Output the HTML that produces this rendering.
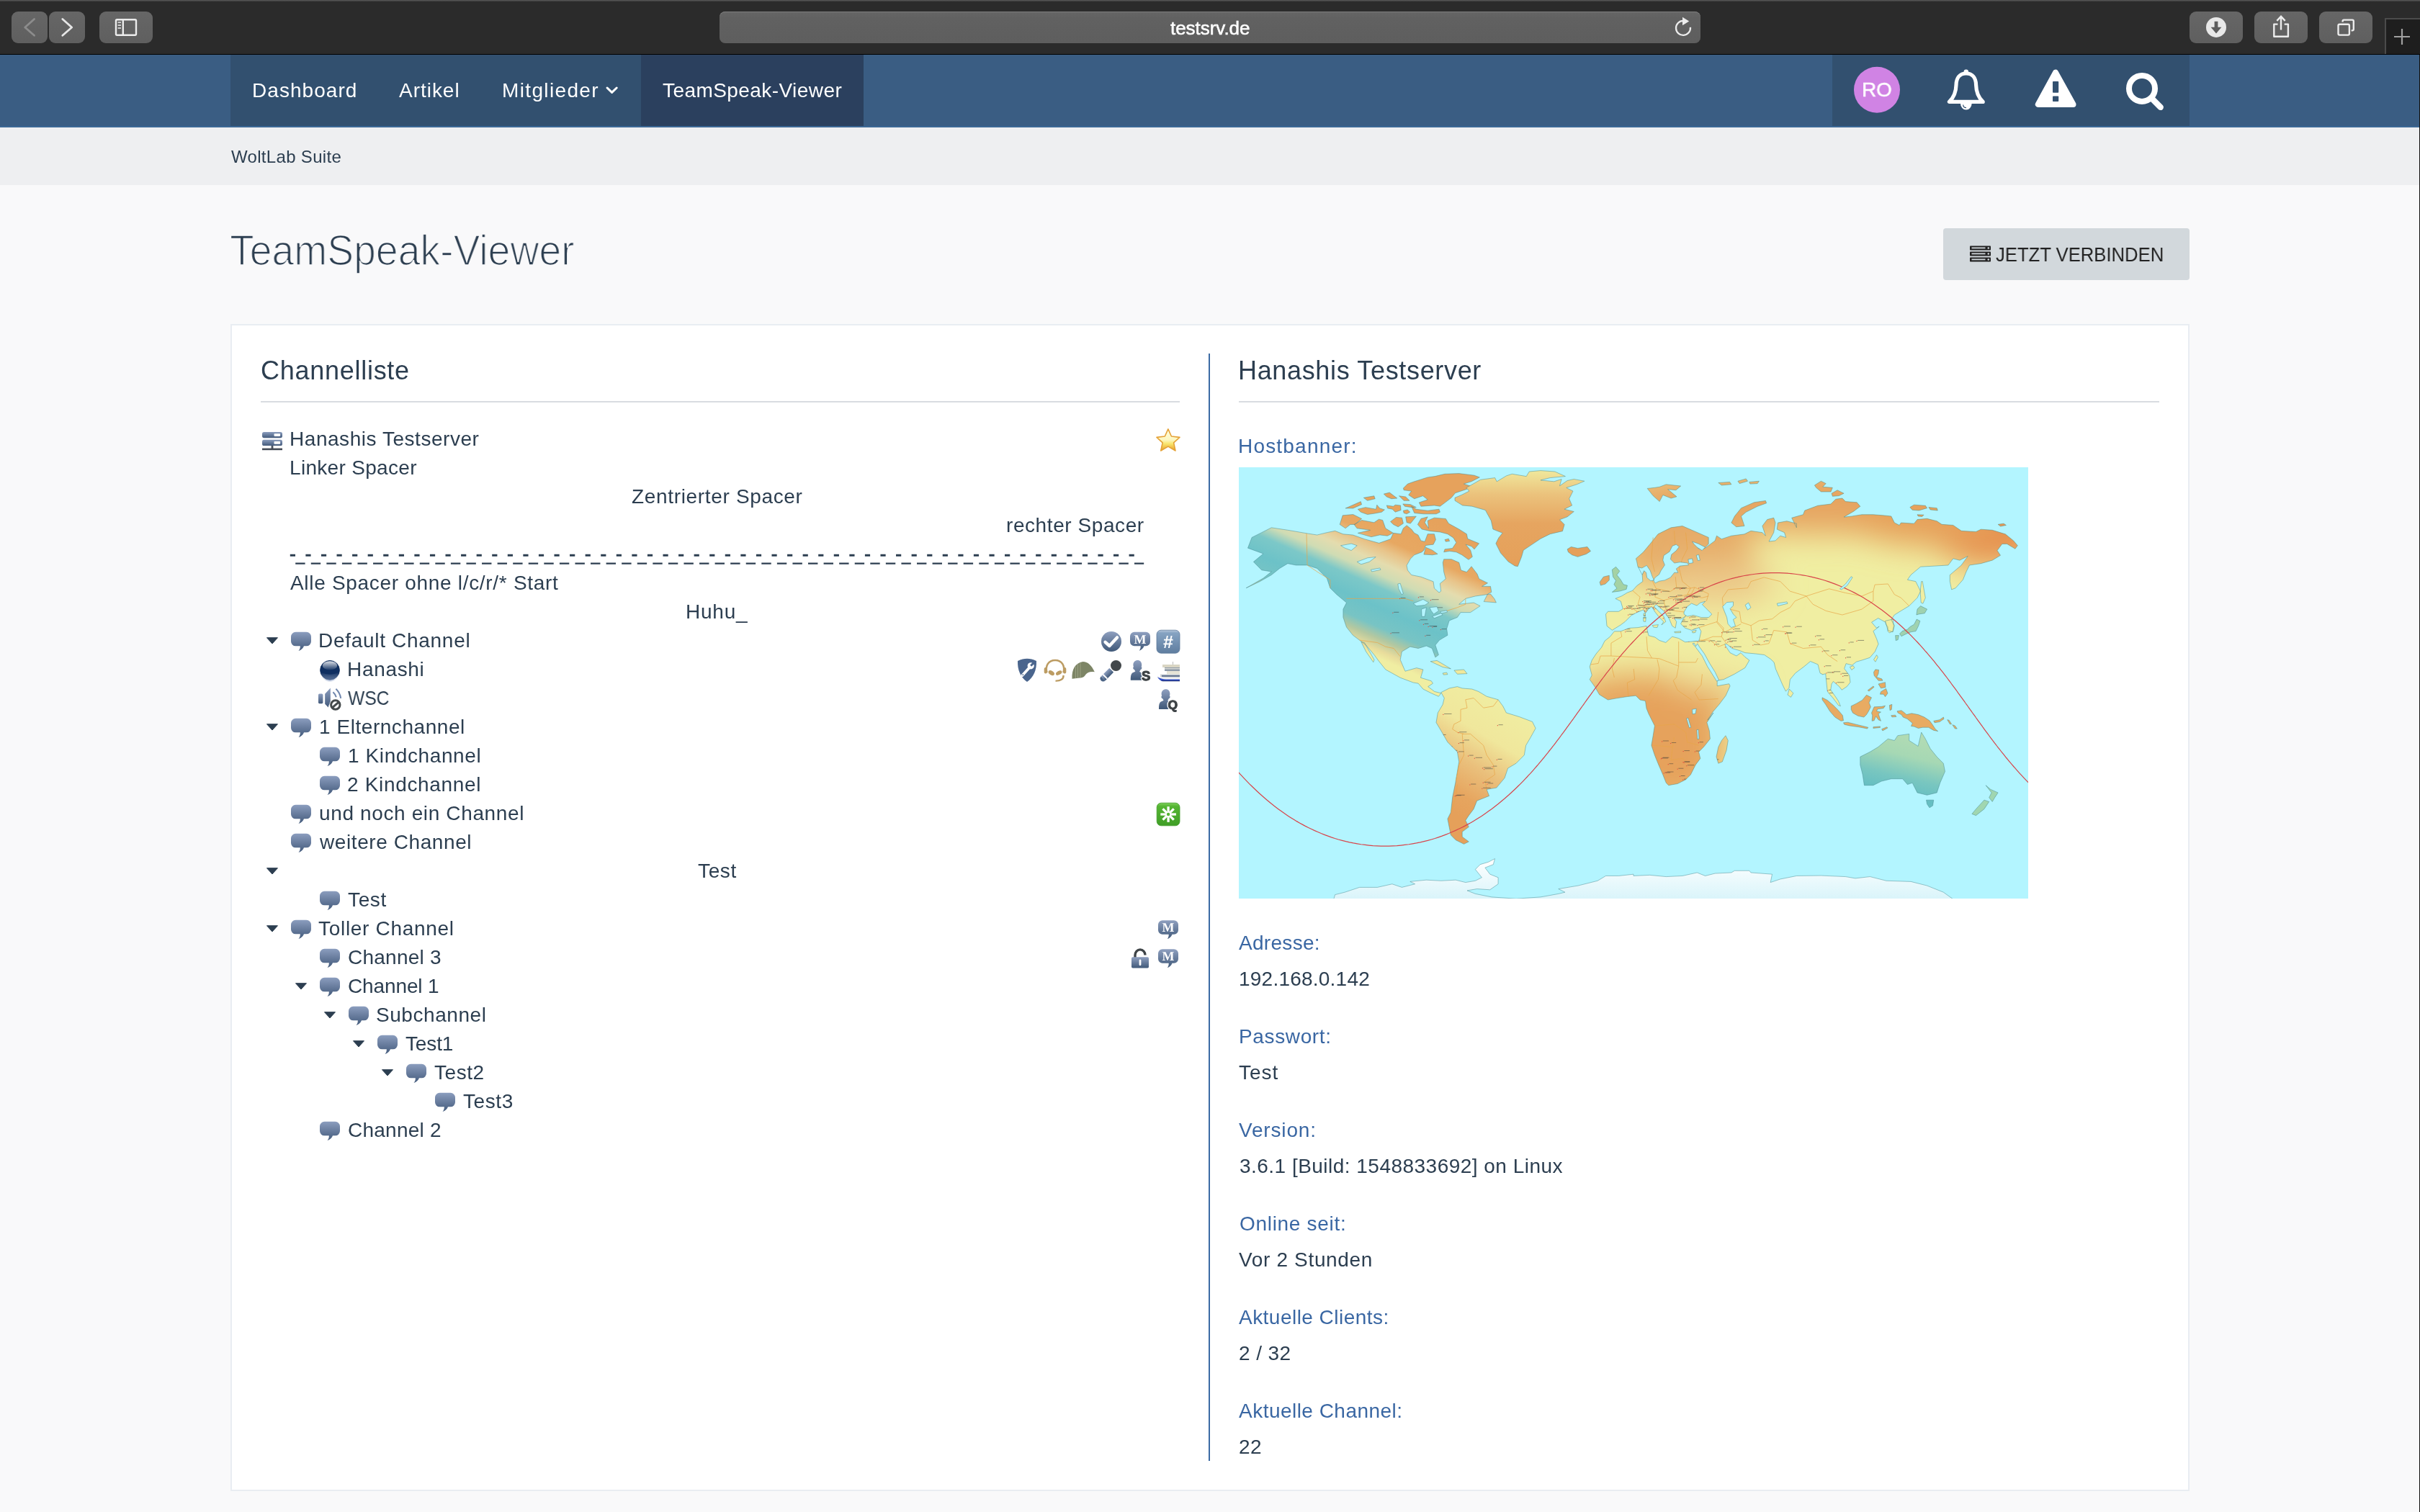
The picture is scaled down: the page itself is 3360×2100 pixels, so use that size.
<!DOCTYPE html>
<html><head><meta charset="utf-8"><title>TeamSpeak-Viewer</title><style>
html,body{margin:0;padding:0}
body{width:3360px;height:2100px;overflow:hidden;background:#f9f9fa;font-family:"Liberation Sans",sans-serif;position:relative}
.a{position:absolute}
.t{position:absolute;white-space:pre;font-family:"Liberation Sans",sans-serif;will-change:transform}
svg{position:absolute;overflow:visible;will-change:transform}
svg text{text-rendering:geometricPrecision}
</style></head><body>
<div class="a" style="left:0px;top:0px;width:3360px;height:76px;background:#2b2b2b"></div>
<div class="a" style="left:0px;top:0px;width:3360px;height:2px;background:linear-gradient(#5a5a5a,#3c3c3c)"></div>
<div class="a" style="left:0px;top:74.7px;width:3360px;height:1.3px;background:#000"></div>
<div class="a" style="left:16px;top:16px;width:50px;height:44px;background:linear-gradient(#666,#5f5f5f);border-radius:9px"></div>
<div class="a" style="left:68px;top:16px;width:50px;height:44px;background:linear-gradient(#666,#5f5f5f);border-radius:9px"></div>
<div class="a" style="left:138px;top:16px;width:74px;height:44px;background:linear-gradient(#666,#5f5f5f);border-radius:9px"></div>
<div class="a" style="left:999px;top:16px;width:1361.5px;height:44px;background:linear-gradient(#666 0,#616161 20%,#5e5e5e);border-radius:8px;box-shadow:inset 0 1px 0 #7c7c7c"></div>
<div class="a" style="left:3040px;top:16px;width:74px;height:44px;background:linear-gradient(#666,#5f5f5f);border-radius:9px"></div>
<div class="a" style="left:3130px;top:16px;width:74px;height:44px;background:linear-gradient(#666,#5f5f5f);border-radius:9px"></div>
<div class="a" style="left:3220px;top:16px;width:74px;height:44px;background:linear-gradient(#666,#5f5f5f);border-radius:9px"></div>
<div class="a" style="left:3311px;top:25px;width:49px;height:50px;background:#1e1e1e;border-left:2px solid #4b4b4b;border-top:2px solid #4b4b4b;box-sizing:border-box"></div>
<svg style="left:0;top:0" width="3360" height="2100" viewBox="0 0 3360 2100">
<polyline points="47.6,26.5 34.7,38 47.6,49.3" fill="none" stroke="#8c8c8c" stroke-width="2.8" stroke-linecap="round" stroke-linejoin="round"/>
<polyline points="86.8,26.5 99.7,38 86.8,49.3" fill="none" stroke="#e6e6e6" stroke-width="2.8" stroke-linecap="round" stroke-linejoin="round"/>
<rect x="161" y="27.2" width="28" height="21.6" rx="1.5" fill="none" stroke="#ececec" stroke-width="2.4"/>
<line x1="170.8" y1="27" x2="170.8" y2="49" stroke="#ececec" stroke-width="2.4"/>
<line x1="163.6" y1="31.2" x2="168" y2="31.2" stroke="#d8d8d8" stroke-width="1.8"/>
<line x1="163.6" y1="35.1" x2="168" y2="35.1" stroke="#d8d8d8" stroke-width="1.8"/>
<line x1="163.6" y1="39" x2="168" y2="39" stroke="#d8d8d8" stroke-width="1.8"/>
<path d="M2346.95,37.85 A10,10 0 1 1 2337.00,28.90" fill="none" stroke="#ececec" stroke-width="2.3"/>
<polygon points="2336,23.8 2345.2,29.4 2336,35.2" fill="#ececec"/>
<circle cx="3077" cy="37.9" r="14" fill="#e8e8e8"/>
<path d="M3074.6,29.8 h4.8 v8 h5 l-7.4,8.6 l-7.4,-8.6 h5 z" fill="#5c5c5c"/>
<path d="M3162.5,33.6 h-5.2 v17.2 h19.6 v-17.2 h-5.2" fill="none" stroke="#ececec" stroke-width="2.4" stroke-linejoin="round"/>
<path d="M3167,41.6 V23.4 M3161.3,28.8 L3167,22.8 L3172.7,28.8" fill="none" stroke="#ececec" stroke-width="2.4"/>
<rect x="3246.5" y="33.8" width="15.4" height="14.8" rx="1.8" fill="none" stroke="#ececec" stroke-width="2.4"/>
<path d="M3252.6,30.6 v-1.2 a1.8,1.8 0 0 1 1.8,-1.8 h11.6 a1.8,1.8 0 0 1 1.8,1.8 v11.2 a1.8,1.8 0 0 1 -1.8,1.8 h-1.4" fill="none" stroke="#ececec" stroke-width="2.4"/>
<path d="M3324,51 h22 M3335,40 v22" stroke="#a0a0a0" stroke-width="2.2" fill="none"/>
</svg>
<div class="a" style="left:0px;top:76px;width:3360px;height:101px;background:#3a5d83"></div>
<div class="a" style="left:320px;top:76px;width:879px;height:99px;background:#32506f"></div>
<div class="a" style="left:890px;top:76px;width:309px;height:99px;background:#2b405e"></div>
<div class="a" style="left:2544px;top:76px;width:496px;height:99px;background:#32506f"></div>
<div class="a" style="left:0px;top:175px;width:3360px;height:2px;background:#3b6896"></div>
<div class="a" style="left:0px;top:177px;width:3360px;height:80px;background:#eeeff1"></div>
<div class="a" style="left:3358.8px;top:76px;width:1.2px;height:2024px;background:#111"></div>
<svg style="left:0;top:0" width="3360" height="2100" viewBox="0 0 3360 2100">
<polyline points="843,122 849.6,128.4 856.2,122" fill="none" stroke="#fff" stroke-width="3" stroke-linecap="round" stroke-linejoin="round"/>
<circle cx="2606" cy="124.7" r="32" fill="#d083e4"/>
<path d="M2729.8,102 c-9,0 -13.6,6.5 -13.8,16 c-0.2,11 -3.2,17.4 -9.6,23.4 h46.8 c-6.4,-6 -9.4,-12.4 -9.6,-23.4 c-0.2,-9.500 -4.800,-16 -13.800,-16 z" fill="none" stroke="#fff" stroke-width="5.2" stroke-linejoin="round"/>
<circle cx="2729.8" cy="99.8" r="3.2" fill="#fff"/>
<path d="M2722,144 a7.800,8.600 0 0 0 15.600,0 z" fill="#fff"/>
<path d="M2725.600,145.500 a4.600,4.600 0 0 0 4.400,4.200" fill="none" stroke="#32506f" stroke-width="1.200"/>
<path d="M2854,100.600 L2829.800,145 H2878.500 Z" fill="#fff" stroke="#fff" stroke-width="8" stroke-linejoin="round"/>
<rect x="2850" y="113" width="8.200" height="15.800" rx="0.800" fill="#32506f"/>
<rect x="2850" y="133.500" width="8.200" height="7.500" rx="0.800" fill="#32506f"/>
<circle cx="2974" cy="122.900" r="18" fill="none" stroke="#fff" stroke-width="8"/>
<line x1="2988.500" y1="137.600" x2="2999.700" y2="148.900" stroke="#fff" stroke-width="8.400" stroke-linecap="round"/>
</svg>
<div class="a" style="left:2698px;top:317px;width:342px;height:72px;background:#d2d8dc;border-radius:4px"></div>
<div class="a" style="left:320px;top:450px;width:2720px;height:1621px;background:#fff;border:2px solid #e9edf2;box-sizing:border-box"></div>
<div class="a" style="left:362px;top:556.5px;width:1276px;height:2px;background:#d9dce1"></div>
<div class="a" style="left:1720px;top:556.5px;width:1278px;height:2px;background:#d9dce1"></div>
<div class="a" style="left:1678px;top:491px;width:2px;height:1538px;background:#3c6ba4"></div>
<svg style="left:0;top:0" width="3360" height="2100" viewBox="0 0 3360 2100">
<defs>
<linearGradient id="gB" x1="0" y1="0" x2="0" y2="1"><stop offset="0" stop-color="#8b9dbe"/><stop offset="1" stop-color="#435a7b"/></linearGradient>
<linearGradient id="gB2" x1="0" y1="0" x2="0" y2="1"><stop offset="0" stop-color="#8fa0c0"/><stop offset="1" stop-color="#3f5878"/></linearGradient>
<linearGradient id="gHash" x1="0" y1="0" x2="0" y2="1"><stop offset="0" stop-color="#b9c9dc"/><stop offset="0.12" stop-color="#86a3c2"/><stop offset="1" stop-color="#5f7d9f"/></linearGradient>
<linearGradient id="gGreen" x1="0" y1="0" x2="0" y2="1"><stop offset="0" stop-color="#7fd05a"/><stop offset="0.15" stop-color="#55b533"/><stop offset="1" stop-color="#3f9e26"/></linearGradient>
<linearGradient id="gStar" x1="0" y1="0" x2="0" y2="1"><stop offset="0" stop-color="#fffde0"/><stop offset="0.5" stop-color="#fdf7c0"/><stop offset="0.68" stop-color="#f9e56c"/><stop offset="1" stop-color="#e79b2a"/></linearGradient>
<radialGradient id="gSph" cx="0.5" cy="0.5" r="0.5"><stop offset="0" stop-color="#0d2d5f"/><stop offset="1" stop-color="#0d2d5f"/></radialGradient>
<linearGradient id="gSphHi" x1="0" y1="0" x2="0" y2="1"><stop offset="0" stop-color="#ffffff" stop-opacity="0.85"/><stop offset="1" stop-color="#ffffff" stop-opacity="0.05"/></linearGradient>
<linearGradient id="gSphLo" x1="0" y1="0" x2="0" y2="1"><stop offset="0" stop-color="#ffffff" stop-opacity="0"/><stop offset="1" stop-color="#8aa0c8" stop-opacity="0.55"/></linearGradient>
<g id="chan"><path d="M6.500,0 h15 a6.500,6.500 0 0 1 6.500,6.500 v6.500 a6.500,6.500 0 0 1 -6.500,6.500 h-3.500 c-1.500,3.500 -4,5.800 -7.500,6.800 c1.700,-2 2.400,-4.200 2.300,-6.800 h-6.300 a6.500,6.500 0 0 1 -6.500,-6.500 v-6.500 a6.500,6.500 0 0 1 6.500,-6.500 z" fill="url(#gB)"/></g>
<g id="arrow"><path d="M0.700,0.900 h15 l-7.500,8.300 z" fill="#2c3e50" stroke="#2c3e50" stroke-width="1" stroke-linejoin="round"/></g>
<g id="mbub"><path d="M6,0 h16 a6,6 0 0 1 6,6 v7.500 a6,6 0 0 1 -6,6 h-2.500 c-1.200,3.200 -3.600,5.400 -6.800,6.400 c1.500,-1.900 2.100,-4 2,-6.400 h-8.700 a6,6 0 0 1 -6,-6 v-7.500 a6,6 0 0 1 6,-6 z" fill="url(#gB2)"/><text x="14" y="16.200" text-anchor="middle" font-family="Liberation Serif" font-weight="bold" font-size="18" fill="#fff">M</text></g>
<g id="person"><path d="M9.800,0 c3.400,0 5.600,2.700 5.600,6.200 c0,1.200 -0.200,2.200 -0.600,3.100 c0.700,0.200 1,1 0.700,2 c-0.300,1 -0.800,1.500 -1.500,1.500 c-0.400,1.200 -1,2.100 -1.700,2.700 c0.500,1.200 1.800,1.700 3.400,2.300 v10 h-15.700 c0,-6 0.500,-9.200 3,-10.600 c1.700,-0.900 3,-1.200 3.600,-2 c-0.700,-0.600 -1.200,-1.400 -1.600,-2.400 c-0.700,0 -1.200,-0.500 -1.500,-1.500 c-0.300,-1 0,-1.800 0.700,-2 c-0.400,-0.900 -0.600,-1.900 -0.600,-3.100 c0,-3.500 2.600,-6.200 6.200,-6.200 z" fill="url(#gB2)"/></g>
</defs>
<g transform="translate(364,600)"><rect x="0" y="0" width="28" height="8.200" rx="2.600" fill="url(#gB)"/><rect x="16.500" y="2.300" width="8.600" height="3.600" rx="0.800" fill="#fff"/><rect x="0" y="10.800" width="28" height="8.200" rx="2.600" fill="url(#gB)"/><rect x="16.500" y="13.100" width="8.600" height="3.600" rx="0.800" fill="#fff"/><rect x="12.600" y="19" width="2.800" height="4" fill="#4a5260"/><rect x="0" y="22.600" width="28" height="2.600" fill="#444a55"/></g>
<use href="#chan" x="404" y="877.8"/>
<use href="#chan" x="404" y="997.8"/>
<use href="#chan" x="444" y="1037.8"/>
<use href="#chan" x="444" y="1077.8"/>
<use href="#chan" x="404" y="1117.8"/>
<use href="#chan" x="404" y="1157.8"/>
<use href="#chan" x="444" y="1237.8"/>
<use href="#chan" x="404" y="1277.8"/>
<use href="#chan" x="444" y="1317.8"/>
<use href="#chan" x="444" y="1357.8"/>
<use href="#chan" x="484" y="1397.8"/>
<use href="#chan" x="524" y="1437.8"/>
<use href="#chan" x="564" y="1477.8"/>
<use href="#chan" x="604" y="1517.8"/>
<use href="#chan" x="444" y="1557.8"/>
<use href="#arrow" x="369.8" y="884.8"/>
<use href="#arrow" x="369.8" y="1004.8"/>
<use href="#arrow" x="369.8" y="1204.8"/>
<use href="#arrow" x="369.8" y="1284.8"/>
<use href="#arrow" x="409.8" y="1364.8"/>
<use href="#arrow" x="449.8" y="1404.8"/>
<use href="#arrow" x="489.8" y="1444.8"/>
<use href="#arrow" x="529.8" y="1484.8"/>
<circle cx="458" cy="930.8" r="13.400" fill="#0f2f61" stroke="#0b2a5a" stroke-width="0.800"/>
<ellipse cx="458" cy="924.4" rx="10.200" ry="6.200" fill="url(#gSphHi)"/>
<path d="M445.4,933.8 a12.600,12.600 0 0 0 25.200,0 a30,30 0 0 1 -25.200,0 z" fill="url(#gSphLo)"/>
<g transform="translate(442,955)"><rect x="0" y="8.600" width="6.400" height="13.600" rx="1.600" fill="url(#gB)"/><path d="M16.800,0.600 v21 c-1.800,1.800 -2.800,3.800 -3,6 l-4.600,-4.800 v-14 z" fill="url(#gB)"/><path d="M20.400,6.200 c2.200,2 3.600,4.200 4.400,7" fill="none" stroke="#6f86ad" stroke-width="2"/><path d="M24.400,1.800 c3.800,3.600 6,8 6.800,13" fill="none" stroke="#6f86ad" stroke-width="2"/><circle cx="23.800" cy="24" r="8.400" fill="#fff"/><circle cx="23.800" cy="24" r="6.200" fill="none" stroke="#454a4c" stroke-width="3"/><line x1="19.600" y1="27.600" x2="28" y2="20.400" stroke="#454a4c" stroke-width="3"/></g>
<polygon points="1621.87,595.87 1626.43,605.99 1637.94,607.38 1629.60,614.92 1631.98,626.03 1621.87,620.08 1611.75,626.03 1614.13,614.92 1605.99,607.38 1617.30,605.99" fill="url(#gStar)" stroke="#e5a237" stroke-width="1.600" stroke-linejoin="round"/>
<circle cx="1543" cy="891" r="14" fill="url(#gB2)"/>
<polyline points="1534.600,891.800 1540.400,897 1551,885.400" fill="none" stroke="#fff" stroke-width="4.400" stroke-linecap="round" stroke-linejoin="round"/>
<use href="#mbub" x="1569" y="877.800"/>
<rect x="1606" y="875.200" width="32" height="32" rx="6" fill="url(#gHash)" stroke="#5f7b9c" stroke-width="0.800"/>
<text x="1622" y="900" text-anchor="middle" font-family="Liberation Sans" font-weight="bold" font-size="25" fill="#fff">#</text>
<path d="M1413,918 c4.500,-2.200 8.800,-3.200 13,-3.200 c4.200,0 8.500,1 13,3.200 c0.400,12.500 -3.800,22.500 -13,29 c-9.200,-6.500 -13.400,-16.500 -13,-29 z" fill="#4a658d"/>
<path d="M1419.500,938 l9.500,-10.500" stroke="#fff" stroke-width="3.800" stroke-linecap="round" fill="none"/>
<circle cx="1431.200" cy="924.800" r="4.600" fill="#fff"/><path d="M1431.200,924.800 l4.500,-4.800" stroke="#4a658d" stroke-width="3" fill="none"/>
<circle cx="1420.300" cy="937.200" r="0.900" fill="#4a658d"/>
<path d="M1453.500,934 c-2.500,-9 2,-17 11.500,-17 c9.500,0 14,8 11.500,17" fill="none" stroke="#bc9c63" stroke-width="2.600"/>
<rect x="1449.700" y="927" width="4.200" height="8.500" rx="2" fill="#bc9c63"/><rect x="1476.100" y="927" width="4.200" height="8.500" rx="2" fill="#bc9c63"/>
<ellipse cx="1459.800" cy="934.600" rx="4.600" ry="2.800" transform="rotate(35 1459.800 934.600)" fill="#bc9c63"/><ellipse cx="1470.200" cy="934.600" rx="4.600" ry="2.600" transform="rotate(-30 1470.200 934.600)" fill="#bc9c63"/>
<path d="M1476.500,938 c0.500,5 -4,8 -11,7.600" fill="none" stroke="#bc9c63" stroke-width="2.400"/>
<path d="M1488.500,942.800 c-0.500,-13 4,-22 15,-23.800 c7,0 12,5 16.300,14.200 c-6,-1 -10,0.600 -12.300,3.600 c-1.500,2 -2.500,4 -6,4.500 z" fill="#7d8566"/>
<path d="M1493.500,926 v16 M1496.500,922.500 v19.500 M1500,920.500 v21" stroke="#a3a98c" stroke-width="0.800" fill="none"/>
<circle cx="1549.500" cy="924.500" r="7.500" fill="#42474a"/>
<g transform="rotate(-45 1538 936)"><rect x="1529" y="931.800" width="16.500" height="8.400" rx="1" fill="url(#gB2)"/><rect x="1531.800" y="931.800" width="2" height="8.400" fill="#fff"/><path d="M1529,931.800 a4.200,4.200 0 0 0 0,8.400 z" fill="#4a6385"/></g>
<use href="#person" x="1569.800" y="917"/>
<text x="1591.2" y="944.500" text-anchor="middle" font-family="Liberation Sans" font-weight="bold" font-size="18.500" fill="#fff" stroke="#fff" stroke-width="3.600" stroke-linejoin="round">S</text><text x="1591.2" y="944.500" text-anchor="middle" font-family="Liberation Sans" font-weight="bold" font-size="18.500" fill="#3d4245" stroke="#3d4245" stroke-width="1">S</text>
<g><rect x="1614" y="923" width="24" height="4" fill="#d9d5c3"/><rect x="1617" y="927" width="21" height="5" fill="#8e9aa8"/><rect x="1617" y="928.200" width="21" height="1.200" fill="#e8e6dc"/><rect x="1620" y="932" width="18" height="4.500" fill="#e6e3d6"/><rect x="1611" y="936.500" width="27" height="4.500" fill="#cfd3d8"/><path d="M1613,937.800 h25 v2 h-25 z" fill="#5d6f8c"/><path d="M1606.300,938.500 c4,1.500 8,2.300 12,2.500 h19.700 v3 h-19 c2,0 -10,-1.500 -12.700,-5.500 z" fill="#f2f2f2"/><path d="M1607,940.300 c3,2 8,3 12,3.200 h19 v2.500 h-25 c-3,-1.500 -5,-3.500 -6,-5.700 z" fill="#3350c4"/><path d="M1612,945 h26 v1.200 h-24 z" fill="#1f2f7a"/><rect x="1628" y="919" width="1" height="4" fill="#bbb"/></g>
<use href="#person" x="1609" y="957.200"/>
<text x="1628.400" y="984.600" text-anchor="middle" font-family="Liberation Sans" font-weight="bold" font-size="17.500" fill="#fff" stroke="#fff" stroke-width="3.600" stroke-linejoin="round">Q</text><text x="1628.400" y="984.600" text-anchor="middle" font-family="Liberation Sans" font-weight="bold" font-size="17.500" fill="#3d4245" stroke="#3d4245" stroke-width="1">Q</text>
<rect x="1606.200" y="1115.200" width="31.800" height="31.600" rx="6" fill="url(#gGreen)" stroke="#3e9a27" stroke-width="0.800"/>
<line x1="1611.30" y1="1131.00" x2="1632.90" y2="1131.00" stroke="#fff" stroke-width="3.300"/>
<line x1="1614.46" y1="1123.36" x2="1629.74" y2="1138.64" stroke="#fff" stroke-width="3.300"/>
<line x1="1622.10" y1="1120.20" x2="1622.10" y2="1141.80" stroke="#fff" stroke-width="3.300"/>
<line x1="1629.74" y1="1123.36" x2="1614.46" y2="1138.64" stroke="#fff" stroke-width="3.300"/>
<circle cx="1622.100" cy="1131" r="2.200" fill="#55b533"/>
<use href="#mbub" x="1608" y="1278.200"/>
<use href="#mbub" x="1608" y="1318.200"/>
<path d="M1576,1330 v-3.500 a7,7.600 0 0 1 14,0" fill="none" stroke="#3f4447" stroke-width="3.400"/>
<rect x="1571" y="1329.200" width="24" height="15.400" rx="1.800" fill="url(#gB2)"/>
<rect x="1581.600" y="1332.600" width="2.800" height="8.600" rx="1.400" fill="#fff"/>
<line x1="402.800" y1="771.200" x2="1580" y2="771.200" stroke="#2c3e50" stroke-width="3" stroke-dasharray="7.200 14.370"/>
<line x1="410.200" y1="782.600" x2="1588.200" y2="782.600" stroke="#2c3e50" stroke-width="2.400" stroke-dasharray="13.400 8.170"/>
<rect x="2735" y="341.5" width="29" height="6" rx="0.800" fill="#222"/>
<rect x="2737.500" y="343.5" width="19" height="1.800" fill="#d2d8dc"/>
<circle cx="2760.800" cy="344.5" r="1.300" fill="#d2d8dc"/>
<rect x="2735" y="349.5" width="29" height="6" rx="0.800" fill="#222"/>
<rect x="2737.500" y="351.5" width="19" height="1.800" fill="#d2d8dc"/>
<circle cx="2760.800" cy="352.5" r="1.300" fill="#d2d8dc"/>
<rect x="2735" y="357.5" width="29" height="6" rx="0.800" fill="#222"/>
<rect x="2737.500" y="359.5" width="19" height="1.800" fill="#d2d8dc"/>
<circle cx="2760.800" cy="360.5" r="1.300" fill="#d2d8dc"/>
</svg>
<svg style="left:1720px;top:649.4px;overflow:hidden" width="1096" height="599.3" viewBox="0 0 1096 599" preserveAspectRatio="none">
<defs>
<filter id="bl" x="-30%" y="-30%" width="160%" height="160%"><feGaussianBlur stdDeviation="22"/></filter>
<filter id="bl2" x="-30%" y="-30%" width="160%" height="160%"><feGaussianBlur stdDeviation="12"/></filter>
<linearGradient id="mNA" gradientUnits="userSpaceOnUse" x1="239" y1="61" x2="157" y2="249">
<stop offset="0" stop-color="#e6a25c"/><stop offset="0.244" stop-color="#e7a862"/><stop offset="0.317" stop-color="#e8c48a"/><stop offset="0.40" stop-color="#e4dcae"/><stop offset="0.478" stop-color="#cfdcb4"/><stop offset="0.56" stop-color="#7cc8c8"/><stop offset="0.683" stop-color="#6cc2c8"/><stop offset="0.805" stop-color="#78c4c4"/><stop offset="0.878" stop-color="#b4c8a0"/><stop offset="0.95" stop-color="#e8dc9c"/><stop offset="1" stop-color="#f0eea2"/></linearGradient>
<linearGradient id="mGR" x1="0" y1="0" x2="0" y2="1"><stop offset="0" stop-color="#f0e89c"/><stop offset="0.25" stop-color="#ebc27c"/><stop offset="0.55" stop-color="#e6a560"/><stop offset="1" stop-color="#e5a05a"/></linearGradient>
<linearGradient id="mSA" gradientUnits="userSpaceOnUse" x1="390" y1="330" x2="300" y2="480"><stop offset="0" stop-color="#f0eea2"/><stop offset="0.35" stop-color="#f0e79c"/><stop offset="0.6" stop-color="#eac07c"/><stop offset="0.85" stop-color="#e6a55f"/><stop offset="1" stop-color="#e5a05a"/></linearGradient>
<linearGradient id="mAU" gradientUnits="userSpaceOnUse" x1="950" y1="370" x2="930" y2="455"><stop offset="0" stop-color="#b4dcb4"/><stop offset="0.4" stop-color="#a6d8b4"/><stop offset="0.75" stop-color="#78c6c0"/><stop offset="1" stop-color="#66bec2"/></linearGradient>
<linearGradient id="mAN" x1="0" y1="0" x2="0" y2="1"><stop offset="0" stop-color="#ffffff"/><stop offset="1" stop-color="#d8f4fa"/></linearGradient>
<clipPath id="cNA"><path d="M12.5,112.1 L18.1,97.4 L31.7,90.6 L45.3,83.8 L67.9,87.2 L94.0,91.7 L108.7,94.0 L122.3,90.6 L133.6,88.3 L144.9,92.8 L158.5,94.0 L174.4,99.6 L194.7,105.3 L210.6,99.6 L214.6,91.3 L225.1,92.6 L228.4,84.7 L233.1,80.7 L239.7,86.0 L243.7,91.3 L248.9,93.9 L252.9,101.9 L258.2,103.2 L262.2,92.6 L271.4,92.6 L273.4,100.5 L270.1,107.1 L259.5,108.5 L256.9,115.1 L254.2,117.7 L243.7,121.7 L238.4,127.0 L233.1,136.2 L234.4,142.9 L239.7,149.5 L252.9,152.1 L270.1,158.7 L271.4,168.0 L278.0,173.9 L280.7,172.0 L279.4,161.4 L287.3,154.8 L284.7,145.5 L283.3,132.3 L284.7,127.6 L295.2,127.6 L305.8,132.3 L308.5,142.9 L316.4,145.5 L323.0,137.6 L331.0,148.1 L333.6,154.8 L345.5,160.7 L337.6,165.3 L349.5,165.3 L350.8,173.3 L345.5,175.9 L340.2,186.5 L357.4,187.8 L354.8,182.5 L349.5,175.9 L328.4,178.9 L314.8,182.3 L305.7,190.2 L326.1,188.0 L335.1,192.5 L321.6,201.5 L308.0,201.5 L303.4,208.3 L292.1,212.9 L288.7,224.2 L289.9,233.2 L278.5,240.0 L272.9,246.8 L277.4,260.4 L272.9,263.8 L268.3,251.4 L260.4,248.0 L249.1,251.4 L237.8,249.1 L226.4,255.9 L224.2,267.2 L231.0,283.1 L246.8,278.5 L255.9,280.8 L252.5,292.1 L267.2,296.6 L269.5,300.0 L262.7,304.5 L271.7,311.3 L280.8,313.6 L277.4,318.1 L267.2,313.6 L255.9,307.9 L249.1,300.0 L242.3,298.9 L224.2,292.1 L203.8,280.8 L194.7,269.5 L188.0,260.4 L176.6,246.8 L167.6,240.0 L158.5,233.2 L149.5,221.9 L144.9,208.3 L144.9,197.0 L149.5,188.0 L135.9,176.6 L126.8,167.6 L122.3,154.0 L108.7,140.4 L95.1,135.9 L79.3,135.9 L67.9,133.6 L56.6,140.4 L45.3,149.5 L29.4,158.5 L10.2,167.6 L34.0,154.0 L45.3,144.9 L31.7,142.7 L20.4,131.3 L34.0,120.0Z M169.8,242.3 L174.4,243.4 L188.0,267.2 L186.8,270.6 L176.6,255.9Z M140.2,79.4 L144.2,66.8 L158.7,65.5 L170.6,71.4 L161.4,79.4 L154.8,79.4 L148.1,84.7Z M160.1,79.4 L170.6,73.4 L187.8,76.7 L194.4,72.1 L199.7,73.4 L203.7,84.7 L214.3,91.3 L206.3,95.2 L195.8,93.9 L183.9,96.6 L165.3,91.3 L182.5,87.3 L164.0,84.7Z M148.1,56.9 L169.3,47.6 L170.6,51.6 L158.7,56.9Z M165.3,58.2 L175.9,55.6 L190.5,58.2 L191.8,52.2 L195.8,56.9 L202.4,58.9 L198.4,62.2 L187.8,64.2 L178.6,65.5 L169.3,62.2Z M173.3,42.3 L187.8,39.7 L189.2,43.7 L178.6,46.3Z M228.4,29.1 L234.4,23.1 L243.7,19.8 L262.2,13.9 L272.1,12.6 L286.0,9.3 L305.8,8.6 L327.0,11.2 L334.3,13.9 L323.0,19.8 L312.4,23.1 L323.0,26.5 L316.4,30.4 L300.5,35.7 L295.2,42.3 L284.7,50.3 L279.4,54.2 L271.4,52.9 L252.9,54.2 L250.3,48.9 L262.2,45.0 L255.6,39.7 L243.7,43.7 L235.7,38.4 L239.7,33.1 L229.1,31.7Z M239.7,54.2 L246.3,58.2 L262.2,60.2 L278.0,58.2 L279.4,62.2 L274.1,64.8 L256.9,64.8 L243.7,63.5Z M201.3,37.0 L209.3,35.1 L219.8,43.0 L211.9,43.7 L205.3,41.0Z M222.5,39.7 L231.7,41.0 L237.0,46.3 L229.1,46.3Z M227.8,50.9 L238.4,51.6 L246.3,55.6 L239.7,55.6 L230.4,54.2Z M205.3,52.9 L214.6,54.2 L217.2,52.2 L224.5,52.9 L225.1,59.5 L217.2,62.2 L213.2,58.2 L206.6,56.9Z M228.4,60.2 L234.4,58.9 L237.7,62.2 L233.1,64.8 L229.1,63.5Z M231.7,68.8 L246.3,68.1 L238.4,78.0 L233.1,76.7Z M210.6,75.4 L218.5,69.4 L226.5,70.1 L228.4,78.0 L221.2,82.7 L214.6,79.4Z M248.3,79.4 L252.9,71.4 L262.2,68.8 L258.2,76.7 L263.5,84.7 L262.2,74.1 L271.4,70.1 L287.3,71.4 L291.3,78.0 L305.8,86.0 L316.4,92.6 L317.7,99.2 L333.6,105.8 L327.0,113.8 L323.0,109.8 L315.1,107.1 L321.7,115.1 L324.3,124.3 L319.0,128.3 L309.8,121.7 L301.9,117.7 L292.6,116.4 L284.7,117.7 L286.0,113.8 L296.6,112.4 L301.9,104.5 L297.9,97.9 L289.9,92.6 L279.4,89.9 L266.1,88.6 L254.2,86.0Z M259.5,111.1 L268.8,115.1 L276.1,120.4 L268.8,121.7 L256.9,121.0Z M286.0,100.5 L291.3,99.2 L292.6,102.5 L287.3,103.2Z"/></clipPath>
<clipPath id="cALL"><path d="M551.4,126.8 L561.6,117.8 L572.9,104.2 L582.0,92.8 L600.1,83.8 L615.9,81.5 L634.1,89.4 L652.2,97.4 L652.2,106.4 L645.4,113.2 L636.3,108.7 L631.8,104.2 L638.6,113.2 L647.6,112.1 L661.2,101.9 L663.5,95.1 L670.3,99.6 L683.9,95.1 L702.0,92.8 L711.0,88.3 L726.9,90.6 L731.4,95.1 L726.9,81.5 L733.7,72.5 L742.7,70.2 L745.0,77.0 L742.7,90.6 L736.0,103.0 L745.0,101.9 L751.8,95.1 L759.7,97.4 L757.5,90.6 L747.3,86.1 L748.4,77.0 L760.9,74.7 L774.4,78.1 L774.4,83.8 L767.7,70.2 L783.5,65.7 L785.8,60.0 L803.9,53.2 L822.0,51.0 L828.8,44.2 L837.9,43.0 L842.4,47.6 L858.2,48.7 L862.8,54.3 L853.7,61.1 L840.1,69.1 L851.4,67.9 L865.0,65.7 L880.9,65.7 L894.5,66.8 L905.8,67.9 L910.3,77.0 L917.1,80.4 L919.4,77.0 L937.5,78.1 L942.0,72.5 L955.6,71.3 L969.2,74.7 L976.0,79.3 L991.8,80.4 L1003.2,88.3 L1023.5,89.4 L1030.3,86.1 L1046.2,87.2 L1064.3,92.8 L1075.6,101.9 L1081.3,108.7 L1077.9,113.2 L1066.6,106.4 L1059.8,106.4 L1053.0,115.5 L1057.5,122.3 L1046.2,129.1 L1030.3,133.6 L1014.5,135.9 L1010.0,144.9 L1005.4,156.2 L995.2,167.6 L989.6,169.8 L987.3,158.5 L987.3,149.5 L1003.2,135.9 L1012.2,123.4 L1000.9,129.1 L991.8,126.8 L985.0,135.9 L966.9,137.0 L946.6,138.1 L933.0,149.5 L928.4,156.2 L939.8,158.5 L946.6,172.1 L942.0,181.2 L930.7,192.5 L919.4,199.3 L910.3,204.9 L905.8,211.7 L910.3,219.7 L908.1,228.7 L901.3,226.4 L897.9,215.1 L887.7,209.5 L878.6,215.1 L885.4,223.1 L889.2,221.0 L880.9,227.5 L885.6,238.2 L888.0,245.3 L883.3,255.9 L876.2,264.2 L865.5,267.7 L857.3,270.1 L851.4,274.8 L843.1,272.5 L840.7,279.5 L847.8,289.0 L849.0,298.5 L844.3,304.4 L837.2,309.1 L833.6,304.4 L825.4,297.3 L823.0,300.8 L821.8,309.1 L827.7,317.4 L832.5,324.5 L835.4,331.5 L832.5,330.4 L825.4,320.9 L818.3,312.6 L817.1,310.3 L814.7,286.6 L810.0,287.8 L810.0,287.2 L807.0,285.7 L804.1,273.8 L793.6,269.4 L784.7,276.8 L772.8,285.7 L765.4,294.6 L763.9,306.5 L759.4,311.0 L755.0,302.1 L750.5,291.7 L745.3,279.8 L743.1,270.8 L738.6,266.4 L729.7,260.4 L717.8,258.9 L702.9,257.5 L695.5,254.5 L685.0,251.5 L677.6,245.5 L674.6,245.5 L676.1,248.5 L682.1,257.5 L691.0,261.9 L697.0,257.5 L702.9,263.4 L708.9,267.9 L702.9,278.3 L688.0,287.2 L673.1,294.6 L664.2,296.1 L664.2,303.6 L680.6,300.6 L682.1,303.6 L676.1,317.0 L667.2,328.9 L658.3,339.3 L650.8,351.0 L659.0,340.8 L649.9,354.3 L653.3,365.7 L654.4,377.0 L645.4,388.3 L638.6,395.1 L640.8,404.2 L634.1,413.2 L627.3,426.8 L620.5,433.6 L609.1,439.3 L596.7,441.5 L593.3,438.1 L588.8,426.8 L582.0,411.0 L577.4,399.6 L572.9,386.1 L575.2,372.5 L577.4,358.9 L570.6,345.3 L569.0,342.2 L566.0,334.8 L564.5,324.4 L557.1,322.9 L551.2,317.0 L539.3,318.4 L524.4,320.7 L512.5,322.9 L500.6,315.5 L494.6,305.1 L487.2,294.6 L490.2,288.7 L487.2,276.8 L490.2,267.9 L496.1,258.9 L503.6,250.0 L508.0,241.1 L515.5,235.1 L521.4,227.7 L530.3,227.7 L542.2,223.2 L554.1,222.5 L566.0,220.3 L567.5,227.7 L569.0,233.6 L577.9,235.9 L583.9,240.3 L592.8,243.3 L601.7,235.1 L610.7,237.4 L619.6,242.6 L630.0,241.8 L638.9,241.1 L641.9,227.7 L638.9,222.5 L628.5,226.2 L619.6,223.2 L613.6,217.3 L616.6,211.3 L621.1,205.4 L618.1,208.4 L613.6,210.6 L604.7,209.8 L607.7,214.3 L606.2,223.2 L601.7,220.3 L597.3,209.8 L589.8,199.4 L579.4,190.5 L576.5,193.5 L582.4,199.4 L589.8,206.9 L592.8,214.3 L586.9,218.8 L589.8,214.3 L583.9,208.4 L577.9,200.9 L573.5,193.5 L569.0,196.5 L564.5,202.4 L561.6,197.9 L554.1,200.9 L545.2,205.4 L536.3,214.3 L530.3,218.8 L518.4,226.2 L511.0,220.3 L509.5,203.9 L512.5,200.2 L527.4,200.2 L533.3,196.5 L530.3,186.0 L522.9,182.3 L531.8,178.6 L539.3,174.1 L546.7,171.2 L552.6,164.5 L560.8,158.5 L560.1,148.9 L563.1,142.9 L554.1,138.4 L552.6,131.0Z M683.9,77.0 L688.4,67.9 L697.5,56.6 L715.6,48.7 L731.4,46.4 L732.6,49.8 L720.1,54.3 L704.2,62.3 L697.5,67.9 L702.0,81.5 L690.7,82.7Z M567.2,29.4 L577.4,28.3 L584.2,27.2 L593.3,23.8 L613.7,26.0 L606.9,31.7 L595.6,30.6 L608.0,40.8 L600.1,43.0 L588.8,38.5 L584.2,47.6 L575.2,39.6Z M665.8,21.5 L681.6,20.4 L683.9,23.8 L670.3,24.9Z M692.9,19.2 L704.2,15.9 L706.5,19.2 L695.2,22.6Z M708.8,20.4 L722.4,19.2 L720.1,22.6 L709.9,23.1Z M799.4,24.9 L808.4,19.2 L815.2,22.6 L810.7,27.2 L824.3,28.3 L822.0,34.0 L808.4,34.0 L801.6,28.3Z M823.1,36.2 L831.1,31.7 L840.1,36.2 L833.3,39.6 L824.3,40.3Z M931.8,55.5 L937.5,52.1 L953.3,53.2 L955.6,56.6 L944.3,60.0 L935.2,59.3Z M957.9,55.5 L969.2,56.6 L970.3,60.0 L960.1,58.9Z M942.0,65.7 L951.1,66.1 L948.8,68.4 L943.2,67.9Z M1054.1,79.3 L1062.0,78.1 L1065.4,80.4 L1057.5,82.0Z M947.7,158.5 L949.3,158.5 L953.3,181.2 L949.9,189.1 L947.2,188.0 L946.1,172.1Z M675.9,372.5 L679.3,379.3 L677.1,392.8 L671.4,408.7 L665.8,411.0 L663.0,401.9 L665.8,388.3 L670.3,379.3Z M764.3,307.9 L769.9,313.6 L766.5,319.2 L762.0,315.9Z M885.6,260.6 L887.4,263.6 L883.9,270.1 L881.5,267.1Z M848.4,277.2 L853.1,275.4 L854.9,278.4 L850.8,281.3Z M897.5,213.4 L902.2,212.2 L908.1,211.0 L909.3,220.5 L908.1,227.5 L903.4,229.9 L901.0,227.5 L901.0,221.6 L898.6,218.1Z M574.2,219.5 L582.4,218.5 L580.9,222.5 L575.7,222.0Z M561.6,208.4 L565.3,208.1 L564.8,214.3 L561.9,214.0Z M561.9,203.2 L564.3,202.4 L564.5,206.9 L562.3,206.9Z M604.7,228.4 L613.6,227.7 L613.6,229.5 L605.5,229.8Z M629.3,227.7 L635.2,226.2 L633.7,229.5 L630.0,229.8Z M12.5,112.1 L18.1,97.4 L31.7,90.6 L45.3,83.8 L67.9,87.2 L94.0,91.7 L108.7,94.0 L122.3,90.6 L133.6,88.3 L144.9,92.8 L158.5,94.0 L174.4,99.6 L194.7,105.3 L210.6,99.6 L214.6,91.3 L225.1,92.6 L228.4,84.7 L233.1,80.7 L239.7,86.0 L243.7,91.3 L248.9,93.9 L252.9,101.9 L258.2,103.2 L262.2,92.6 L271.4,92.6 L273.4,100.5 L270.1,107.1 L259.5,108.5 L256.9,115.1 L254.2,117.7 L243.7,121.7 L238.4,127.0 L233.1,136.2 L234.4,142.9 L239.7,149.5 L252.9,152.1 L270.1,158.7 L271.4,168.0 L278.0,173.9 L280.7,172.0 L279.4,161.4 L287.3,154.8 L284.7,145.5 L283.3,132.3 L284.7,127.6 L295.2,127.6 L305.8,132.3 L308.5,142.9 L316.4,145.5 L323.0,137.6 L331.0,148.1 L333.6,154.8 L345.5,160.7 L337.6,165.3 L349.5,165.3 L350.8,173.3 L345.5,175.9 L340.2,186.5 L357.4,187.8 L354.8,182.5 L349.5,175.9 L328.4,178.9 L314.8,182.3 L305.7,190.2 L326.1,188.0 L335.1,192.5 L321.6,201.5 L308.0,201.5 L303.4,208.3 L292.1,212.9 L288.7,224.2 L289.9,233.2 L278.5,240.0 L272.9,246.8 L277.4,260.4 L272.9,263.8 L268.3,251.4 L260.4,248.0 L249.1,251.4 L237.8,249.1 L226.4,255.9 L224.2,267.2 L231.0,283.1 L246.8,278.5 L255.9,280.8 L252.5,292.1 L267.2,296.6 L269.5,300.0 L262.7,304.5 L271.7,311.3 L280.8,313.6 L277.4,318.1 L267.2,313.6 L255.9,307.9 L249.1,300.0 L242.3,298.9 L224.2,292.1 L203.8,280.8 L194.7,269.5 L188.0,260.4 L176.6,246.8 L167.6,240.0 L158.5,233.2 L149.5,221.9 L144.9,208.3 L144.9,197.0 L149.5,188.0 L135.9,176.6 L126.8,167.6 L122.3,154.0 L108.7,140.4 L95.1,135.9 L79.3,135.9 L67.9,133.6 L56.6,140.4 L45.3,149.5 L29.4,158.5 L10.2,167.6 L34.0,154.0 L45.3,144.9 L31.7,142.7 L20.4,131.3 L34.0,120.0Z M169.8,242.3 L174.4,243.4 L188.0,267.2 L186.8,270.6 L176.6,255.9Z M140.2,79.4 L144.2,66.8 L158.7,65.5 L170.6,71.4 L161.4,79.4 L154.8,79.4 L148.1,84.7Z M160.1,79.4 L170.6,73.4 L187.8,76.7 L194.4,72.1 L199.7,73.4 L203.7,84.7 L214.3,91.3 L206.3,95.2 L195.8,93.9 L183.9,96.6 L165.3,91.3 L182.5,87.3 L164.0,84.7Z M148.1,56.9 L169.3,47.6 L170.6,51.6 L158.7,56.9Z M165.3,58.2 L175.9,55.6 L190.5,58.2 L191.8,52.2 L195.8,56.9 L202.4,58.9 L198.4,62.2 L187.8,64.2 L178.6,65.5 L169.3,62.2Z M173.3,42.3 L187.8,39.7 L189.2,43.7 L178.6,46.3Z M228.4,29.1 L234.4,23.1 L243.7,19.8 L262.2,13.9 L272.1,12.6 L286.0,9.3 L305.8,8.6 L327.0,11.2 L334.3,13.9 L323.0,19.8 L312.4,23.1 L323.0,26.5 L316.4,30.4 L300.5,35.7 L295.2,42.3 L284.7,50.3 L279.4,54.2 L271.4,52.9 L252.9,54.2 L250.3,48.9 L262.2,45.0 L255.6,39.7 L243.7,43.7 L235.7,38.4 L239.7,33.1 L229.1,31.7Z M239.7,54.2 L246.3,58.2 L262.2,60.2 L278.0,58.2 L279.4,62.2 L274.1,64.8 L256.9,64.8 L243.7,63.5Z M201.3,37.0 L209.3,35.1 L219.8,43.0 L211.9,43.7 L205.3,41.0Z M222.5,39.7 L231.7,41.0 L237.0,46.3 L229.1,46.3Z M227.8,50.9 L238.4,51.6 L246.3,55.6 L239.7,55.6 L230.4,54.2Z M205.3,52.9 L214.6,54.2 L217.2,52.2 L224.5,52.9 L225.1,59.5 L217.2,62.2 L213.2,58.2 L206.6,56.9Z M228.4,60.2 L234.4,58.9 L237.7,62.2 L233.1,64.8 L229.1,63.5Z M231.7,68.8 L246.3,68.1 L238.4,78.0 L233.1,76.7Z M210.6,75.4 L218.5,69.4 L226.5,70.1 L228.4,78.0 L221.2,82.7 L214.6,79.4Z M248.3,79.4 L252.9,71.4 L262.2,68.8 L258.2,76.7 L263.5,84.7 L262.2,74.1 L271.4,70.1 L287.3,71.4 L291.3,78.0 L305.8,86.0 L316.4,92.6 L317.7,99.2 L333.6,105.8 L327.0,113.8 L323.0,109.8 L315.1,107.1 L321.7,115.1 L324.3,124.3 L319.0,128.3 L309.8,121.7 L301.9,117.7 L292.6,116.4 L284.7,117.7 L286.0,113.8 L296.6,112.4 L301.9,104.5 L297.9,97.9 L289.9,92.6 L279.4,89.9 L266.1,88.6 L254.2,86.0Z M259.5,111.1 L268.8,115.1 L276.1,120.4 L268.8,121.7 L256.9,121.0Z M286.0,100.5 L291.3,99.2 L292.6,102.5 L287.3,103.2Z M280.8,312.5 L292.1,306.8 L303.4,304.5 L310.2,306.8 L323.8,307.9 L332.9,311.3 L344.2,318.1 L360.1,322.6 L366.8,331.7 L371.4,340.8 L389.5,346.4 L407.6,353.2 L412.1,362.3 L405.3,374.7 L398.6,386.1 L396.3,399.6 L385.0,411.0 L373.6,417.8 L369.1,431.3 L357.8,444.9 L344.2,447.2 L347.6,456.2 L330.6,463.0 L326.1,474.4 L319.3,483.4 L314.8,490.2 L319.3,499.3 L310.2,506.1 L310.2,512.9 L319.3,519.7 L312.5,523.1 L301.2,517.4 L294.4,510.6 L292.1,499.3 L289.9,488.0 L294.4,478.9 L296.6,458.5 L301.2,435.9 L305.7,408.7 L303.4,395.1 L289.9,381.5 L280.8,365.7 L274.0,354.3 L276.3,340.8 L283.1,329.4 L285.3,320.4Z"/></clipPath>
<clipPath id="cEA"><path d="M551.4,126.8 L561.6,117.8 L572.9,104.2 L582.0,92.8 L600.1,83.8 L615.9,81.5 L634.1,89.4 L652.2,97.4 L652.2,106.4 L645.4,113.2 L636.3,108.7 L631.8,104.2 L638.6,113.2 L647.6,112.1 L661.2,101.9 L663.5,95.1 L670.3,99.6 L683.9,95.1 L702.0,92.8 L711.0,88.3 L726.9,90.6 L731.4,95.1 L726.9,81.5 L733.7,72.5 L742.7,70.2 L745.0,77.0 L742.7,90.6 L736.0,103.0 L745.0,101.9 L751.8,95.1 L759.7,97.4 L757.5,90.6 L747.3,86.1 L748.4,77.0 L760.9,74.7 L774.4,78.1 L774.4,83.8 L767.7,70.2 L783.5,65.7 L785.8,60.0 L803.9,53.2 L822.0,51.0 L828.8,44.2 L837.9,43.0 L842.4,47.6 L858.2,48.7 L862.8,54.3 L853.7,61.1 L840.1,69.1 L851.4,67.9 L865.0,65.7 L880.9,65.7 L894.5,66.8 L905.8,67.9 L910.3,77.0 L917.1,80.4 L919.4,77.0 L937.5,78.1 L942.0,72.5 L955.6,71.3 L969.2,74.7 L976.0,79.3 L991.8,80.4 L1003.2,88.3 L1023.5,89.4 L1030.3,86.1 L1046.2,87.2 L1064.3,92.8 L1075.6,101.9 L1081.3,108.7 L1077.9,113.2 L1066.6,106.4 L1059.8,106.4 L1053.0,115.5 L1057.5,122.3 L1046.2,129.1 L1030.3,133.6 L1014.5,135.9 L1010.0,144.9 L1005.4,156.2 L995.2,167.6 L989.6,169.8 L987.3,158.5 L987.3,149.5 L1003.2,135.9 L1012.2,123.4 L1000.9,129.1 L991.8,126.8 L985.0,135.9 L966.9,137.0 L946.6,138.1 L933.0,149.5 L928.4,156.2 L939.8,158.5 L946.6,172.1 L942.0,181.2 L930.7,192.5 L919.4,199.3 L910.3,204.9 L905.8,211.7 L910.3,219.7 L908.1,228.7 L901.3,226.4 L897.9,215.1 L887.7,209.5 L878.6,215.1 L885.4,223.1 L889.2,221.0 L880.9,227.5 L885.6,238.2 L888.0,245.3 L883.3,255.9 L876.2,264.2 L865.5,267.7 L857.3,270.1 L851.4,274.8 L843.1,272.5 L840.7,279.5 L847.8,289.0 L849.0,298.5 L844.3,304.4 L837.2,309.1 L833.6,304.4 L825.4,297.3 L823.0,300.8 L821.8,309.1 L827.7,317.4 L832.5,324.5 L835.4,331.5 L832.5,330.4 L825.4,320.9 L818.3,312.6 L817.1,310.3 L814.7,286.6 L810.0,287.8 L810.0,287.2 L807.0,285.7 L804.1,273.8 L793.6,269.4 L784.7,276.8 L772.8,285.7 L765.4,294.6 L763.9,306.5 L759.4,311.0 L755.0,302.1 L750.5,291.7 L745.3,279.8 L743.1,270.8 L738.6,266.4 L729.7,260.4 L717.8,258.9 L702.9,257.5 L695.5,254.5 L685.0,251.5 L677.6,245.5 L674.6,245.5 L676.1,248.5 L682.1,257.5 L691.0,261.9 L697.0,257.5 L702.9,263.4 L708.9,267.9 L702.9,278.3 L688.0,287.2 L673.1,294.6 L664.2,296.1 L664.2,303.6 L680.6,300.6 L682.1,303.6 L676.1,317.0 L667.2,328.9 L658.3,339.3 L650.8,351.0 L659.0,340.8 L649.9,354.3 L653.3,365.7 L654.4,377.0 L645.4,388.3 L638.6,395.1 L640.8,404.2 L634.1,413.2 L627.3,426.8 L620.5,433.6 L609.1,439.3 L596.7,441.5 L593.3,438.1 L588.8,426.8 L582.0,411.0 L577.4,399.6 L572.9,386.1 L575.2,372.5 L577.4,358.9 L570.6,345.3 L569.0,342.2 L566.0,334.8 L564.5,324.4 L557.1,322.9 L551.2,317.0 L539.3,318.4 L524.4,320.7 L512.5,322.9 L500.6,315.5 L494.6,305.1 L487.2,294.6 L490.2,288.7 L487.2,276.8 L490.2,267.9 L496.1,258.9 L503.6,250.0 L508.0,241.1 L515.5,235.1 L521.4,227.7 L530.3,227.7 L542.2,223.2 L554.1,222.5 L566.0,220.3 L567.5,227.7 L569.0,233.6 L577.9,235.9 L583.9,240.3 L592.8,243.3 L601.7,235.1 L610.7,237.4 L619.6,242.6 L630.0,241.8 L638.9,241.1 L641.9,227.7 L638.9,222.5 L628.5,226.2 L619.6,223.2 L613.6,217.3 L616.6,211.3 L621.1,205.4 L618.1,208.4 L613.6,210.6 L604.7,209.8 L607.7,214.3 L606.2,223.2 L601.7,220.3 L597.3,209.8 L589.8,199.4 L579.4,190.5 L576.5,193.5 L582.4,199.4 L589.8,206.9 L592.8,214.3 L586.9,218.8 L589.8,214.3 L583.9,208.4 L577.9,200.9 L573.5,193.5 L569.0,196.5 L564.5,202.4 L561.6,197.9 L554.1,200.9 L545.2,205.4 L536.3,214.3 L530.3,218.8 L518.4,226.2 L511.0,220.3 L509.5,203.9 L512.5,200.2 L527.4,200.2 L533.3,196.5 L530.3,186.0 L522.9,182.3 L531.8,178.6 L539.3,174.1 L546.7,171.2 L552.6,164.5 L560.8,158.5 L560.1,148.9 L563.1,142.9 L554.1,138.4 L552.6,131.0Z M683.9,77.0 L688.4,67.9 L697.5,56.6 L715.6,48.7 L731.4,46.4 L732.6,49.8 L720.1,54.3 L704.2,62.3 L697.5,67.9 L702.0,81.5 L690.7,82.7Z M567.2,29.4 L577.4,28.3 L584.2,27.2 L593.3,23.8 L613.7,26.0 L606.9,31.7 L595.6,30.6 L608.0,40.8 L600.1,43.0 L588.8,38.5 L584.2,47.6 L575.2,39.6Z M665.8,21.5 L681.6,20.4 L683.9,23.8 L670.3,24.9Z M692.9,19.2 L704.2,15.9 L706.5,19.2 L695.2,22.6Z M708.8,20.4 L722.4,19.2 L720.1,22.6 L709.9,23.1Z M799.4,24.9 L808.4,19.2 L815.2,22.6 L810.7,27.2 L824.3,28.3 L822.0,34.0 L808.4,34.0 L801.6,28.3Z M823.1,36.2 L831.1,31.7 L840.1,36.2 L833.3,39.6 L824.3,40.3Z M931.8,55.5 L937.5,52.1 L953.3,53.2 L955.6,56.6 L944.3,60.0 L935.2,59.3Z M957.9,55.5 L969.2,56.6 L970.3,60.0 L960.1,58.9Z M942.0,65.7 L951.1,66.1 L948.8,68.4 L943.2,67.9Z M1054.1,79.3 L1062.0,78.1 L1065.4,80.4 L1057.5,82.0Z M947.7,158.5 L949.3,158.5 L953.3,181.2 L949.9,189.1 L947.2,188.0 L946.1,172.1Z M675.9,372.5 L679.3,379.3 L677.1,392.8 L671.4,408.7 L665.8,411.0 L663.0,401.9 L665.8,388.3 L670.3,379.3Z M764.3,307.9 L769.9,313.6 L766.5,319.2 L762.0,315.9Z M885.6,260.6 L887.4,263.6 L883.9,270.1 L881.5,267.1Z M848.4,277.2 L853.1,275.4 L854.9,278.4 L850.8,281.3Z M897.5,213.4 L902.2,212.2 L908.1,211.0 L909.3,220.5 L908.1,227.5 L903.4,229.9 L901.0,227.5 L901.0,221.6 L898.6,218.1Z M574.2,219.5 L582.4,218.5 L580.9,222.5 L575.7,222.0Z M561.6,208.4 L565.3,208.1 L564.8,214.3 L561.9,214.0Z M561.9,203.2 L564.3,202.4 L564.5,206.9 L562.3,206.9Z M604.7,228.4 L613.6,227.7 L613.6,229.5 L605.5,229.8Z M629.3,227.7 L635.2,226.2 L633.7,229.5 L630.0,229.8Z"/></clipPath>
</defs>
<rect x="0" y="0" width="1096" height="599" fill="#b3f5ff"/>
<path d="M131.3,601.2 L133.6,593.3 L147.2,589.9 L167.6,583.1 L192.5,583.1 L212.9,578.5 L226.4,583.1 L244.6,578.5 L237.8,575.1 L260.4,572.9 L280.8,574.0 L301.2,572.9 L314.8,576.3 L328.4,574.0 L337.4,569.5 L328.4,558.2 L335.1,551.4 L346.5,548.0 L355.5,543.4 L353.3,551.4 L341.9,555.9 L348.7,564.9 L360.1,569.5 L360.1,578.5 L348.7,586.5 L330.6,585.3 L317.0,587.6 L328.4,592.1 L351.0,596.6 L385.0,598.9 L418.9,596.6 L443.8,592.1 L452.9,589.9 L443.8,585.3 L471.0,580.8 L498.2,574.0 L509.5,567.2 L527.6,567.2 L548.0,564.9 L548.0,567.2 L570.6,566.1 L593.3,568.3 L615.9,567.2 L636.3,562.7 L647.6,567.2 L661.2,563.8 L683.9,562.7 L688.4,560.0 L708.8,560.0 L711.0,562.7 L740.5,564.9 L738.2,576.3 L751.8,571.7 L774.4,567.2 L808.4,566.8 L842.4,568.3 L856.0,570.6 L876.4,568.3 L899.0,574.0 L933.0,575.1 L955.6,580.8 L978.3,589.9 L994.1,601.2Z" fill="url(#mAN)" stroke="#3f7f86" stroke-width="0.45" stroke-linejoin="round"/>
<path d="M12.5,112.1 L18.1,97.4 L31.7,90.6 L45.3,83.8 L67.9,87.2 L94.0,91.7 L108.7,94.0 L122.3,90.6 L133.6,88.3 L144.9,92.8 L158.5,94.0 L174.4,99.6 L194.7,105.3 L210.6,99.6 L214.6,91.3 L225.1,92.6 L228.4,84.7 L233.1,80.7 L239.7,86.0 L243.7,91.3 L248.9,93.9 L252.9,101.9 L258.2,103.2 L262.2,92.6 L271.4,92.6 L273.4,100.5 L270.1,107.1 L259.5,108.5 L256.9,115.1 L254.2,117.7 L243.7,121.7 L238.4,127.0 L233.1,136.2 L234.4,142.9 L239.7,149.5 L252.9,152.1 L270.1,158.7 L271.4,168.0 L278.0,173.9 L280.7,172.0 L279.4,161.4 L287.3,154.8 L284.7,145.5 L283.3,132.3 L284.7,127.6 L295.2,127.6 L305.8,132.3 L308.5,142.9 L316.4,145.5 L323.0,137.6 L331.0,148.1 L333.6,154.8 L345.5,160.7 L337.6,165.3 L349.5,165.3 L350.8,173.3 L345.5,175.9 L340.2,186.5 L357.4,187.8 L354.8,182.5 L349.5,175.9 L328.4,178.9 L314.8,182.3 L305.7,190.2 L326.1,188.0 L335.1,192.5 L321.6,201.5 L308.0,201.5 L303.4,208.3 L292.1,212.9 L288.7,224.2 L289.9,233.2 L278.5,240.0 L272.9,246.8 L277.4,260.4 L272.9,263.8 L268.3,251.4 L260.4,248.0 L249.1,251.4 L237.8,249.1 L226.4,255.9 L224.2,267.2 L231.0,283.1 L246.8,278.5 L255.9,280.8 L252.5,292.1 L267.2,296.6 L269.5,300.0 L262.7,304.5 L271.7,311.3 L280.8,313.6 L277.4,318.1 L267.2,313.6 L255.9,307.9 L249.1,300.0 L242.3,298.9 L224.2,292.1 L203.8,280.8 L194.7,269.5 L188.0,260.4 L176.6,246.8 L167.6,240.0 L158.5,233.2 L149.5,221.9 L144.9,208.3 L144.9,197.0 L149.5,188.0 L135.9,176.6 L126.8,167.6 L122.3,154.0 L108.7,140.4 L95.1,135.9 L79.3,135.9 L67.9,133.6 L56.6,140.4 L45.3,149.5 L29.4,158.5 L10.2,167.6 L34.0,154.0 L45.3,144.9 L31.7,142.7 L20.4,131.3 L34.0,120.0Z M169.8,242.3 L174.4,243.4 L188.0,267.2 L186.8,270.6 L176.6,255.9Z M140.2,79.4 L144.2,66.8 L158.7,65.5 L170.6,71.4 L161.4,79.4 L154.8,79.4 L148.1,84.7Z M160.1,79.4 L170.6,73.4 L187.8,76.7 L194.4,72.1 L199.7,73.4 L203.7,84.7 L214.3,91.3 L206.3,95.2 L195.8,93.9 L183.9,96.6 L165.3,91.3 L182.5,87.3 L164.0,84.7Z M148.1,56.9 L169.3,47.6 L170.6,51.6 L158.7,56.9Z M165.3,58.2 L175.9,55.6 L190.5,58.2 L191.8,52.2 L195.8,56.9 L202.4,58.9 L198.4,62.2 L187.8,64.2 L178.6,65.5 L169.3,62.2Z M173.3,42.3 L187.8,39.7 L189.2,43.7 L178.6,46.3Z M228.4,29.1 L234.4,23.1 L243.7,19.8 L262.2,13.9 L272.1,12.6 L286.0,9.3 L305.8,8.6 L327.0,11.2 L334.3,13.9 L323.0,19.8 L312.4,23.1 L323.0,26.5 L316.4,30.4 L300.5,35.7 L295.2,42.3 L284.7,50.3 L279.4,54.2 L271.4,52.9 L252.9,54.2 L250.3,48.9 L262.2,45.0 L255.6,39.7 L243.7,43.7 L235.7,38.4 L239.7,33.1 L229.1,31.7Z M239.7,54.2 L246.3,58.2 L262.2,60.2 L278.0,58.2 L279.4,62.2 L274.1,64.8 L256.9,64.8 L243.7,63.5Z M201.3,37.0 L209.3,35.1 L219.8,43.0 L211.9,43.7 L205.3,41.0Z M222.5,39.7 L231.7,41.0 L237.0,46.3 L229.1,46.3Z M227.8,50.9 L238.4,51.6 L246.3,55.6 L239.7,55.6 L230.4,54.2Z M205.3,52.9 L214.6,54.2 L217.2,52.2 L224.5,52.9 L225.1,59.5 L217.2,62.2 L213.2,58.2 L206.6,56.9Z M228.4,60.2 L234.4,58.9 L237.7,62.2 L233.1,64.8 L229.1,63.5Z M231.7,68.8 L246.3,68.1 L238.4,78.0 L233.1,76.7Z M210.6,75.4 L218.5,69.4 L226.5,70.1 L228.4,78.0 L221.2,82.7 L214.6,79.4Z M248.3,79.4 L252.9,71.4 L262.2,68.8 L258.2,76.7 L263.5,84.7 L262.2,74.1 L271.4,70.1 L287.3,71.4 L291.3,78.0 L305.8,86.0 L316.4,92.6 L317.7,99.2 L333.6,105.8 L327.0,113.8 L323.0,109.8 L315.1,107.1 L321.7,115.1 L324.3,124.3 L319.0,128.3 L309.8,121.7 L301.9,117.7 L292.6,116.4 L284.7,117.7 L286.0,113.8 L296.6,112.4 L301.9,104.5 L297.9,97.9 L289.9,92.6 L279.4,89.9 L266.1,88.6 L254.2,86.0Z M259.5,111.1 L268.8,115.1 L276.1,120.4 L268.8,121.7 L256.9,121.0Z M286.0,100.5 L291.3,99.2 L292.6,102.5 L287.3,103.2Z" fill="url(#mNA)" stroke="#3f7f86" stroke-width="0.45" stroke-linejoin="round"/>
<path d="M266.1,269.5 L275.1,268.3 L294.4,279.7 L283.1,277.4Z M298.9,281.9 L312.5,280.8 L317.0,286.5 L303.4,287.1Z M283.1,285.8 L288.7,284.9 L289.9,287.6 L284.2,288.0Z" fill="#f0e89c" stroke="#3f7f86" stroke-width="0.45" stroke-linejoin="round"/>
<path d="M300.0,42.3 L309.3,38.4 L319.8,33.1 L315.9,28.4 L335.7,17.2 L355.6,14.6 L358.2,19.8 L371.4,11.9 L379.4,9.3 L399.2,12.6 L403.2,6.0 L419.0,4.6 L438.9,6.0 L453.4,12.6 L432.3,14.6 L419.0,17.9 L437.6,19.8 L448.1,16.5 L445.5,25.8 L456.1,18.5 L465.3,16.5 L479.9,19.2 L469.3,23.8 L454.8,28.4 L464.0,33.1 L458.7,43.7 L462.7,52.9 L452.1,58.2 L465.3,61.5 L456.1,68.8 L445.5,72.8 L452.1,79.4 L449.5,88.6 L432.3,92.6 L419.0,99.2 L403.2,109.8 L395.2,115.1 L392.6,124.3 L387.3,137.6 L383.3,136.9 L374.1,131.0 L363.5,119.0 L356.9,105.8 L360.8,97.9 L366.1,91.3 L352.9,86.0 L350.3,74.1 L342.3,59.5 L323.8,54.2 L310.6,52.9 L300.0,46.3Z" fill="url(#mGR)" stroke="#3f7f86" stroke-width="0.45" stroke-linejoin="round"/>
<path d="M456.1,113.8 L461.4,110.4 L470.6,112.4 L483.9,110.4 L488.5,116.4 L482.5,120.4 L470.6,124.3 L462.7,121.7 L457.4,117.7Z" fill="#e5a05a" stroke="#3f7f86" stroke-width="0.45" stroke-linejoin="round"/>
<path d="M280.8,312.5 L292.1,306.8 L303.4,304.5 L310.2,306.8 L323.8,307.9 L332.9,311.3 L344.2,318.1 L360.1,322.6 L366.8,331.7 L371.4,340.8 L389.5,346.4 L407.6,353.2 L412.1,362.3 L405.3,374.7 L398.6,386.1 L396.3,399.6 L385.0,411.0 L373.6,417.8 L369.1,431.3 L357.8,444.9 L344.2,447.2 L347.6,456.2 L330.6,463.0 L326.1,474.4 L319.3,483.4 L314.8,490.2 L319.3,499.3 L310.2,506.1 L310.2,512.9 L319.3,519.7 L312.5,523.1 L301.2,517.4 L294.4,510.6 L292.1,499.3 L289.9,488.0 L294.4,478.9 L296.6,458.5 L301.2,435.9 L305.7,408.7 L303.4,395.1 L289.9,381.5 L280.8,365.7 L274.0,354.3 L276.3,340.8 L283.1,329.4 L285.3,320.4Z" fill="url(#mSA)" stroke="#3f7f86" stroke-width="0.45" stroke-linejoin="round"/>
<g clip-path="url(#cEA)"><rect x="0" y="0" width="1096" height="599" fill="#f0eea2"/>
<g filter="url(#bl)">
<ellipse cx="830" cy="45" rx="330" ry="48" fill="#e6a460"/>
<ellipse cx="1040" cy="95" rx="75" ry="42" fill="#e68a48"/>
<ellipse cx="960" cy="75" rx="110" ry="35" fill="#e6a05a"/>
<ellipse cx="620" cy="118" rx="95" ry="55" fill="#e6ac68"/>
<ellipse cx="660" cy="160" rx="85" ry="30" fill="#ecc888"/>
<ellipse cx="570" cy="325" rx="115" ry="38" fill="#e6a25c"/>
<ellipse cx="600" cy="390" rx="75" ry="80" fill="#e6a25c"/>
<ellipse cx="530" cy="310" rx="50" ry="22" fill="#e6a25c"/>
<ellipse cx="690" cy="315" rx="25" ry="18" fill="#ecd08c"/>
<ellipse cx="632" cy="288" rx="26" ry="22" fill="#f0e49c"/>
</g></g>
<path d="M551.4,126.8 L561.6,117.8 L572.9,104.2 L582.0,92.8 L600.1,83.8 L615.9,81.5 L634.1,89.4 L652.2,97.4 L652.2,106.4 L645.4,113.2 L636.3,108.7 L631.8,104.2 L638.6,113.2 L647.6,112.1 L661.2,101.9 L663.5,95.1 L670.3,99.6 L683.9,95.1 L702.0,92.8 L711.0,88.3 L726.9,90.6 L731.4,95.1 L726.9,81.5 L733.7,72.5 L742.7,70.2 L745.0,77.0 L742.7,90.6 L736.0,103.0 L745.0,101.9 L751.8,95.1 L759.7,97.4 L757.5,90.6 L747.3,86.1 L748.4,77.0 L760.9,74.7 L774.4,78.1 L774.4,83.8 L767.7,70.2 L783.5,65.7 L785.8,60.0 L803.9,53.2 L822.0,51.0 L828.8,44.2 L837.9,43.0 L842.4,47.6 L858.2,48.7 L862.8,54.3 L853.7,61.1 L840.1,69.1 L851.4,67.9 L865.0,65.7 L880.9,65.7 L894.5,66.8 L905.8,67.9 L910.3,77.0 L917.1,80.4 L919.4,77.0 L937.5,78.1 L942.0,72.5 L955.6,71.3 L969.2,74.7 L976.0,79.3 L991.8,80.4 L1003.2,88.3 L1023.5,89.4 L1030.3,86.1 L1046.2,87.2 L1064.3,92.8 L1075.6,101.9 L1081.3,108.7 L1077.9,113.2 L1066.6,106.4 L1059.8,106.4 L1053.0,115.5 L1057.5,122.3 L1046.2,129.1 L1030.3,133.6 L1014.5,135.9 L1010.0,144.9 L1005.4,156.2 L995.2,167.6 L989.6,169.8 L987.3,158.5 L987.3,149.5 L1003.2,135.9 L1012.2,123.4 L1000.9,129.1 L991.8,126.8 L985.0,135.9 L966.9,137.0 L946.6,138.1 L933.0,149.5 L928.4,156.2 L939.8,158.5 L946.6,172.1 L942.0,181.2 L930.7,192.5 L919.4,199.3 L910.3,204.9 L905.8,211.7 L910.3,219.7 L908.1,228.7 L901.3,226.4 L897.9,215.1 L887.7,209.5 L878.6,215.1 L885.4,223.1 L889.2,221.0 L880.9,227.5 L885.6,238.2 L888.0,245.3 L883.3,255.9 L876.2,264.2 L865.5,267.7 L857.3,270.1 L851.4,274.8 L843.1,272.5 L840.7,279.5 L847.8,289.0 L849.0,298.5 L844.3,304.4 L837.2,309.1 L833.6,304.4 L825.4,297.3 L823.0,300.8 L821.8,309.1 L827.7,317.4 L832.5,324.5 L835.4,331.5 L832.5,330.4 L825.4,320.9 L818.3,312.6 L817.1,310.3 L814.7,286.6 L810.0,287.8 L810.0,287.2 L807.0,285.7 L804.1,273.8 L793.6,269.4 L784.7,276.8 L772.8,285.7 L765.4,294.6 L763.9,306.5 L759.4,311.0 L755.0,302.1 L750.5,291.7 L745.3,279.8 L743.1,270.8 L738.6,266.4 L729.7,260.4 L717.8,258.9 L702.9,257.5 L695.5,254.5 L685.0,251.5 L677.6,245.5 L674.6,245.5 L676.1,248.5 L682.1,257.5 L691.0,261.9 L697.0,257.5 L702.9,263.4 L708.9,267.9 L702.9,278.3 L688.0,287.2 L673.1,294.6 L664.2,296.1 L664.2,303.6 L680.6,300.6 L682.1,303.6 L676.1,317.0 L667.2,328.9 L658.3,339.3 L650.8,351.0 L659.0,340.8 L649.9,354.3 L653.3,365.7 L654.4,377.0 L645.4,388.3 L638.6,395.1 L640.8,404.2 L634.1,413.2 L627.3,426.8 L620.5,433.6 L609.1,439.3 L596.7,441.5 L593.3,438.1 L588.8,426.8 L582.0,411.0 L577.4,399.6 L572.9,386.1 L575.2,372.5 L577.4,358.9 L570.6,345.3 L569.0,342.2 L566.0,334.8 L564.5,324.4 L557.1,322.9 L551.2,317.0 L539.3,318.4 L524.4,320.7 L512.5,322.9 L500.6,315.5 L494.6,305.1 L487.2,294.6 L490.2,288.7 L487.2,276.8 L490.2,267.9 L496.1,258.9 L503.6,250.0 L508.0,241.1 L515.5,235.1 L521.4,227.7 L530.3,227.7 L542.2,223.2 L554.1,222.5 L566.0,220.3 L567.5,227.7 L569.0,233.6 L577.9,235.9 L583.9,240.3 L592.8,243.3 L601.7,235.1 L610.7,237.4 L619.6,242.6 L630.0,241.8 L638.9,241.1 L641.9,227.7 L638.9,222.5 L628.5,226.2 L619.6,223.2 L613.6,217.3 L616.6,211.3 L621.1,205.4 L618.1,208.4 L613.6,210.6 L604.7,209.8 L607.7,214.3 L606.2,223.2 L601.7,220.3 L597.3,209.8 L589.8,199.4 L579.4,190.5 L576.5,193.5 L582.4,199.4 L589.8,206.9 L592.8,214.3 L586.9,218.8 L589.8,214.3 L583.9,208.4 L577.9,200.9 L573.5,193.5 L569.0,196.5 L564.5,202.4 L561.6,197.9 L554.1,200.9 L545.2,205.4 L536.3,214.3 L530.3,218.8 L518.4,226.2 L511.0,220.3 L509.5,203.9 L512.5,200.2 L527.4,200.2 L533.3,196.5 L530.3,186.0 L522.9,182.3 L531.8,178.6 L539.3,174.1 L546.7,171.2 L552.6,164.5 L560.8,158.5 L560.1,148.9 L563.1,142.9 L554.1,138.4 L552.6,131.0Z M683.9,77.0 L688.4,67.9 L697.5,56.6 L715.6,48.7 L731.4,46.4 L732.6,49.8 L720.1,54.3 L704.2,62.3 L697.5,67.9 L702.0,81.5 L690.7,82.7Z M567.2,29.4 L577.4,28.3 L584.2,27.2 L593.3,23.8 L613.7,26.0 L606.9,31.7 L595.6,30.6 L608.0,40.8 L600.1,43.0 L588.8,38.5 L584.2,47.6 L575.2,39.6Z M665.8,21.5 L681.6,20.4 L683.9,23.8 L670.3,24.9Z M692.9,19.2 L704.2,15.9 L706.5,19.2 L695.2,22.6Z M708.8,20.4 L722.4,19.2 L720.1,22.6 L709.9,23.1Z M799.4,24.9 L808.4,19.2 L815.2,22.6 L810.7,27.2 L824.3,28.3 L822.0,34.0 L808.4,34.0 L801.6,28.3Z M823.1,36.2 L831.1,31.7 L840.1,36.2 L833.3,39.6 L824.3,40.3Z M931.8,55.5 L937.5,52.1 L953.3,53.2 L955.6,56.6 L944.3,60.0 L935.2,59.3Z M957.9,55.5 L969.2,56.6 L970.3,60.0 L960.1,58.9Z M942.0,65.7 L951.1,66.1 L948.8,68.4 L943.2,67.9Z M1054.1,79.3 L1062.0,78.1 L1065.4,80.4 L1057.5,82.0Z M947.7,158.5 L949.3,158.5 L953.3,181.2 L949.9,189.1 L947.2,188.0 L946.1,172.1Z M675.9,372.5 L679.3,379.3 L677.1,392.8 L671.4,408.7 L665.8,411.0 L663.0,401.9 L665.8,388.3 L670.3,379.3Z M764.3,307.9 L769.9,313.6 L766.5,319.2 L762.0,315.9Z M885.6,260.6 L887.4,263.6 L883.9,270.1 L881.5,267.1Z M848.4,277.2 L853.1,275.4 L854.9,278.4 L850.8,281.3Z M897.5,213.4 L902.2,212.2 L908.1,211.0 L909.3,220.5 L908.1,227.5 L903.4,229.9 L901.0,227.5 L901.0,221.6 L898.6,218.1Z M574.2,219.5 L582.4,218.5 L580.9,222.5 L575.7,222.0Z M561.6,208.4 L565.3,208.1 L564.8,214.3 L561.9,214.0Z M561.9,203.2 L564.3,202.4 L564.5,206.9 L562.3,206.9Z M604.7,228.4 L613.6,227.7 L613.6,229.5 L605.5,229.8Z M629.3,227.7 L635.2,226.2 L633.7,229.5 L630.0,229.8Z" fill="none" stroke="#3f7f86" stroke-width="0.45" stroke-linejoin="round"/>
<path d="M883.9,280.7 L888.6,281.3 L888.0,286.6 L885.6,291.4 L892.7,293.7 L893.9,296.1 L888.0,296.1 L882.1,289.0 L881.5,284.3Z M891.5,311.5 L898.6,307.3 L901.0,313.8 L897.5,318.5 L895.1,315.0 L890.4,315.0Z M873.2,309.7 L880.9,303.8 L882.1,305.0 L875.0,310.9Z M888.0,300.8 L897.5,298.5 L898.0,305.5 L891.5,306.7Z M850.2,331.5 L857.3,328.0 L865.5,323.3 L871.5,316.2 L878.5,319.7 L875.0,326.8 L877.4,332.7 L874.4,338.6 L871.5,343.4 L867.9,346.9 L859.6,345.1 L852.5,341.0 L850.2,336.3Z M810.0,319.7 L817.1,323.3 L825.4,330.4 L832.5,337.5 L838.4,344.5 L839.5,351.6 L836.0,352.2 L827.7,346.9 L820.6,338.6 L814.7,329.2 L810.0,322.7Z M882.1,332.7 L892.7,332.1 L897.5,331.0 L895.1,334.5 L886.8,335.7 L885.6,338.6 L891.5,339.8 L888.0,342.2 L890.4,349.3 L891.5,352.2 L888.0,350.5 L884.5,345.7 L882.1,351.6 L879.1,352.2 L879.7,344.5 L878.5,341.0Z M839.5,354.6 L845.5,354.0 L857.3,357.0 L866.7,359.3 L873.8,361.1 L872.6,362.9 L860.8,360.5 L847.8,358.7 L840.7,357.0Z M914.0,338.6 L919.9,337.5 L924.6,341.0 L927.0,343.4 L934.1,341.6 L943.5,343.4 L951.8,346.9 L958.9,351.6 L962.5,356.4 L967.2,363.5 L970.7,366.4 L964.8,365.2 L957.7,361.1 L949.5,361.1 L943.5,362.3 L937.6,359.9 L933.5,359.3 L935.3,355.2 L928.2,349.3 L922.3,346.9 L919.9,343.4 L915.2,341.0Z M964.8,352.2 L973.1,350.5 L978.4,346.9 L979.0,349.3 L973.1,353.4 L966.0,354.6Z M903.4,330.4 L906.9,329.2 L906.3,336.3 L904.0,337.5Z M892.7,363.5 L899.8,360.5 L901.0,361.7 L893.9,365.8Z M880.9,360.5 L890.4,359.7 L890.4,361.3 L880.9,362.3Z M905.7,344.5 L911.6,344.0 L912.8,346.3 L906.9,346.7Z M983.7,350.5 L986.1,351.0 L989.6,356.4 L987.3,356.6Z M990.8,357.5 L994.4,358.7 L997.3,362.9 L994.4,362.9Z" fill="#e8ab62" stroke="#3f7f86" stroke-width="0.45" stroke-linejoin="round"/>
<path d="M941.2,211.0 L945.9,213.4 L943.5,220.5 L940.0,227.5 L932.9,228.7 L927.0,231.1 L919.9,234.6 L917.5,231.1 L921.1,227.5 L928.2,225.2 L931.7,221.6 L937.6,218.1 L940.0,213.4Z M911.6,233.5 L916.4,233.5 L915.2,239.4 L912.2,240.5Z M942.0,197.0 L946.6,192.5 L955.6,197.0 L952.2,202.7 L944.3,203.8 L940.9,204.9Z" fill="#9fd2b0" stroke="#3f7f86" stroke-width="0.45" stroke-linejoin="round"/>
<path d="M518.3,142.2 L523.5,138.2 L528.8,144.2 L524.9,149.5 L530.2,156.1 L534.1,162.7 L539.4,164.0 L538.1,169.3 L528.8,172.0 L518.3,173.3 L524.9,168.0 L520.9,162.7 L523.5,157.4 L519.6,152.1Z" fill="#a4d2a4" stroke="#3f7f86" stroke-width="0.45" stroke-linejoin="round"/>
<path d="M501.1,159.4 L506.3,152.1 L514.3,150.1 L514.3,156.7 L509.0,162.0 L502.4,164.0Z" fill="#e6a862" stroke="#3f7f86" stroke-width="0.45" stroke-linejoin="round"/>
<path d="M862.8,401.9 L876.4,395.1 L887.7,388.3 L901.3,377.0 L910.3,379.3 L914.8,372.5 L930.7,370.2 L930.7,379.3 L943.2,387.2 L947.7,367.9 L953.3,377.0 L960.1,390.6 L969.2,401.9 L978.3,411.0 L980.5,422.3 L973.7,438.1 L969.2,451.7 L955.6,455.1 L942.0,451.7 L935.2,438.1 L928.4,440.4 L921.6,432.5 L905.8,432.5 L892.2,435.9 L880.9,441.5 L868.4,441.5 L866.2,426.8 L862.8,413.2Z M954.5,461.9 L964.7,461.9 L963.5,469.8 L959.0,472.6 L955.6,467.6Z" fill="url(#mAU)" stroke="#3f7f86" stroke-width="0.45" stroke-linejoin="round"/>
<path d="M1037.1,441.5 L1043.9,447.2 L1054.1,451.7 L1049.6,458.5 L1046.2,464.2 L1041.7,458.5 L1045.1,451.7Z M1034.9,461.9 L1041.7,464.2 L1034.9,474.4 L1023.5,483.4 L1017.9,481.2 L1023.5,474.4Z" fill="#a0d6b0" stroke="#3f7f86" stroke-width="0.45" stroke-linejoin="round"/>
<path d="M94.0,91.7 L95.1,135.9 L108.7,144.9 L126.8,156.2 L126.8,167.6 M149.5,182.3 L231.0,182.3 L242.3,185.7 M288.7,199.3 L303.4,194.7 L314.8,190.2 L314.8,182.3 M167.6,240.0 L192.5,243.4 L203.8,249.1 L215.1,251.4 L224.2,262.7 M671.4,181.2 L679.3,169.8 L706.5,167.6 L711.0,158.5 L729.2,152.9 L751.8,158.5 L765.4,172.1 L788.0,178.9 L794.8,176.6 L819.7,168.7 L842.4,174.4 L865.0,178.9 L880.9,172.1 L883.1,163.0 L901.3,161.9 L910.3,176.6 L919.4,181.2 L930.7,192.5 M788.0,178.9 L797.1,190.2 L815.2,199.3 L837.9,204.9 L865.0,197.0 L880.9,185.7 L880.9,172.1 M671.4,181.2 L672.5,194.7 L695.2,200.4 L697.5,215.1 L711.0,219.7 L722.4,212.9 L740.5,210.6 L751.8,201.5 L765.4,194.7 L772.2,185.7 L788.0,178.9 M711.0,219.7 L713.3,240.0 L724.6,246.8 L736.0,244.6 L742.7,226.4 L760.9,228.7 L765.4,244.6 L783.5,251.4 L808.4,249.1 L817.5,260.4 L831.1,269.5 M663.5,215.1 L674.8,228.7 L697.5,217.4 M638.6,240.0 L654.4,240.0 L665.8,249.1 L674.8,245.7 M566.0,235.1 L567.5,254.5 L573.5,264.9 L583.9,265.6 L610.7,276.0 L610.7,241.8 M530.3,227.7 L531.8,235.1 L516.9,244.1 L516.9,261.9 L502.1,261.9 L499.1,272.3 L488.7,273.8 M516.9,261.9 L573.5,264.9 M580.9,266.4 L583.9,279.8 L582.4,294.6 L569.0,317.0 M610.7,276.0 L607.7,291.7 L603.2,296.1 L609.2,309.5 L628.5,322.9 M610.7,270.8 L634.5,270.8 L637.4,264.9 M643.4,287.2 L641.9,302.1 L633.0,312.5 L638.9,322.9 L665.7,321.4 M548.2,279.8 L549.7,294.6 L539.3,299.1 L540.7,318.4 M521.4,291.7 L518.4,279.8 L521.4,264.9 M577.4,358.9 L604.6,356.6 L620.5,367.9 L622.7,381.5 L638.6,386.1 M575.2,386.1 L602.3,388.3 L604.6,374.7 M602.3,388.3 L600.1,406.4 L615.9,404.2 L627.3,413.2 L634.1,413.2 M301.2,435.9 L305.7,413.2 L312.5,399.6 L310.2,370.2 L321.6,370.2 L339.7,386.1 L344.2,399.6 L353.3,413.2 L355.5,426.8 L341.9,435.9 L344.2,447.2 M296.6,363.4 L298.9,356.6 L308.0,352.1 L308.0,336.2 L317.0,334.0 L314.8,322.6 L326.1,320.4 L339.7,334.0 L353.3,331.7 L360.1,322.6 M296.6,363.4 L303.4,367.9 L312.5,370.2 M294.4,478.9 L301.2,458.5 L303.4,440.4 M533.3,196.5 L545.2,195.0 L554.1,200.9 M546.7,171.2 L557.1,180.1 L554.1,190.5 L563.1,193.5 L573.5,193.5 M573.5,156.3 L579.4,168.2 L598.8,172.7 L607.7,166.7 L606.2,151.8 M579.4,168.2 L577.9,180.1 L589.8,184.6 L607.7,180.1 L628.5,175.6 L633.0,166.7 L652.3,175.6 L649.3,186.0 M607.7,166.7 L625.5,168.2 L633.0,166.7 M589.8,184.6 L592.8,196.5 L606.2,199.4 L618.1,200.9 M665.7,200.9 L664.2,214.3 L673.1,223.2 L670.2,235.1 L677.6,245.5 M638.9,222.5 L664.2,214.3 M641.9,241.1 L658.3,235.1 L670.2,235.1 M575.2,97.4 L572.9,126.8 L577.4,144.9 M604.6,88.3 L605.7,106.4 L602.3,120.0 M620.5,90.6 L622.7,113.2 L615.9,126.8 L611.4,140.4 L615.9,158.5 L627.3,167.6 L622.7,176.6 L643.1,181.2 L652.2,178.9" fill="none" stroke="#e8a548" stroke-width="0.7"/>
<path d="M-3.3,420.2 L-1.1,422.6 L1.1,425.1 L3.3,427.5 L5.6,430.0 L7.9,432.4 L10.3,434.9 L12.7,437.4 L15.1,439.9 L17.6,442.3 L20.2,444.8 L22.8,447.3 L25.4,449.8 L28.1,452.3 L30.9,454.8 L33.7,457.3 L36.6,459.8 L39.5,462.3 L42.5,464.8 L45.6,467.3 L48.7,469.8 L51.9,472.2 L55.2,474.7 L58.5,477.1 L62.0,479.6 L65.5,482.0 L69.1,484.4 L72.7,486.7 L76.5,489.1 L80.3,491.4 L84.3,493.7 L88.3,495.9 L92.4,498.1 L96.6,500.2 L100.9,502.3 L105.3,504.4 L109.7,506.3 L114.3,508.3 L118.9,510.1 L123.7,511.9 L128.5,513.6 L133.4,515.2 L138.4,516.7 L143.5,518.1 L148.6,519.4 L153.8,520.6 L159.1,521.7 L164.4,522.6 L169.8,523.5 L175.3,524.2 L180.7,524.8 L186.2,525.3 L191.8,525.6 L197.3,525.8 L202.9,525.9 L208.4,525.8 L214.0,525.6 L219.5,525.3 L225.0,524.8 L230.5,524.2 L235.9,523.5 L241.3,522.6 L246.6,521.7 L251.9,520.6 L257.1,519.4 L262.3,518.1 L267.3,516.7 L272.3,515.2 L277.2,513.6 L282.1,511.9 L286.8,510.1 L291.5,508.3 L296.0,506.3 L300.5,504.4 L304.9,502.3 L309.2,500.2 L313.4,498.1 L317.5,495.9 L321.5,493.7 L325.4,491.4 L329.3,489.1 L333.0,486.7 L336.7,484.4 L340.3,482.0 L343.8,479.6 L347.2,477.1 L350.6,474.7 L353.8,472.2 L357.0,469.8 L360.2,467.3 L363.2,464.8 L366.2,462.3 L369.2,459.8 L372.0,457.3 L374.9,454.8 L377.6,452.3 L380.3,449.8 L383.0,447.3 L385.6,444.8 L388.1,442.3 L390.6,439.9 L393.1,437.4 L395.5,434.9 L397.8,432.4 L400.1,430.0 L402.4,427.5 L404.7,425.1 L406.9,422.6 L409.1,420.2 L411.2,417.7 L413.3,415.3 L415.4,412.9 L417.4,410.5 L419.4,408.1 L421.4,405.7 L423.4,403.3 L425.3,400.9 L427.3,398.5 L429.2,396.2 L431.0,393.8 L432.9,391.5 L434.7,389.1 L436.6,386.8 L438.4,384.4 L440.1,382.1 L441.9,379.8 L443.7,377.4 L445.4,375.1 L447.1,372.8 L448.8,370.5 L450.6,368.2 L452.2,365.9 L453.9,363.6 L455.6,361.3 L457.3,359.0 L458.9,356.7 L460.6,354.4 L462.2,352.1 L463.9,349.9 L465.5,347.6 L467.2,345.3 L468.8,343.0 L470.4,340.8 L472.1,338.5 L473.7,336.2 L475.3,333.9 L477.0,331.6 L478.6,329.4 L480.2,327.1 L481.9,324.8 L483.5,322.5 L485.2,320.3 L486.8,318.0 L488.5,315.7 L490.1,313.4 L491.8,311.1 L493.5,308.8 L495.2,306.5 L496.8,304.2 L498.6,301.9 L500.3,299.6 L502.0,297.3 L503.7,295.0 L505.5,292.6 L507.3,290.3 L509.0,288.0 L510.8,285.6 L512.7,283.3 L514.5,280.9 L516.4,278.6 L518.2,276.2 L520.1,273.9 L522.1,271.5 L524.0,269.1 L526.0,266.7 L528.0,264.3 L530.0,261.9 L532.0,259.5 L534.1,257.1 L536.2,254.7 L538.3,252.2 L540.5,249.8 L542.7,247.3 L545.0,244.9 L547.3,242.4 L549.6,240.0 L551.9,237.5 L554.3,235.0 L556.8,232.5 L559.3,230.1 L561.8,227.6 L564.4,225.1 L567.1,222.6 L569.8,220.1 L572.5,217.6 L575.4,215.1 L578.2,212.6 L581.2,210.1 L584.2,207.6 L587.2,205.1 L590.4,202.6 L593.6,200.2 L596.8,197.7 L600.2,195.3 L603.6,192.8 L607.1,190.4 L610.7,188.0 L614.4,185.7 L618.1,183.3 L622.0,181.0 L625.9,178.7 L629.9,176.5 L634.0,174.3 L638.2,172.2 L642.5,170.1 L646.9,168.0 L651.4,166.1 L655.9,164.1 L660.6,162.3 L665.3,160.5 L670.2,158.8 L675.1,157.2 L680.1,155.7 L685.1,154.3 L690.3,153.0 L695.5,151.8 L700.8,150.7 L706.1,149.8 L711.5,148.9 L716.9,148.2 L722.4,147.6 L727.9,147.1 L733.4,146.8 L739.0,146.6 L744.5,146.5 L750.1,146.6 L755.6,146.8 L761.2,147.1 L766.7,147.6 L772.1,148.2 L777.6,148.9 L783.0,149.8 L788.3,150.7 L793.6,151.8 L798.8,153.0 L803.9,154.3 L809.0,155.7 L814.0,157.2 L818.9,158.8 L823.7,160.5 L828.5,162.3 L833.1,164.1 L837.7,166.1 L842.1,168.0 L846.5,170.1 L850.8,172.2 L855.0,174.3 L859.1,176.5 L863.1,178.7 L867.1,181.0 L870.9,183.3 L874.7,185.7 L878.3,188.0 L881.9,190.4 L885.4,192.8 L888.9,195.3 L892.2,197.7 L895.5,200.2 L898.7,202.6 L901.8,205.1 L904.9,207.6 L907.9,210.1 L910.8,212.6 L913.7,215.1 L916.5,217.6 L919.3,220.1 L922.0,222.6 L924.6,225.1 L927.2,227.6 L929.8,230.1 L932.3,232.5 L934.7,235.0 L937.1,237.5 L939.5,240.0 L941.8,242.4 L944.1,244.9 L946.3,247.3 L948.5,249.8 L950.7,252.2 L952.8,254.7 L955.0,257.1 L957.0,259.5 L959.1,261.9 L961.1,264.3 L963.1,266.7 L965.1,269.1 L967.0,271.5 L968.9,273.9 L970.8,276.2 L972.7,278.6 L974.5,280.9 L976.4,283.3 L978.2,285.6 L980.0,288.0 L981.8,290.3 L983.6,292.6 L985.3,295.0 L987.1,297.3 L988.8,299.6 L990.5,301.9 L992.2,304.2 L993.9,306.5 L995.6,308.8 L997.3,311.1 L998.9,313.4 L1000.6,315.7 L1002.2,318.0 L1003.9,320.3 L1005.5,322.5 L1007.2,324.8 L1008.8,327.1 L1010.5,329.4 L1012.1,331.6 L1013.7,333.9 L1015.3,336.2 L1017.0,338.5 L1018.6,340.8 L1020.2,343.0 L1021.9,345.3 L1023.5,347.6 L1025.2,349.9 L1026.8,352.1 L1028.5,354.4 L1030.1,356.7 L1031.8,359.0 L1033.4,361.3 L1035.1,363.6 L1036.8,365.9 L1038.5,368.2 L1040.2,370.5 L1041.9,372.8 L1043.6,375.1 L1045.4,377.4 L1047.1,379.8 L1048.9,382.1 L1050.7,384.4 L1052.5,386.8 L1054.3,389.1 L1056.2,391.5 L1058.0,393.8 L1059.9,396.2 L1061.8,398.5 L1063.7,400.9 L1065.6,403.3 L1067.6,405.7 L1069.6,408.1 L1071.6,410.5 L1073.7,412.9 L1075.7,415.3 L1077.9,417.7 L1080.0,420.2 L1082.2,422.6 L1084.4,425.1 L1086.6,427.5 L1088.9,430.0 L1091.2,432.4 L1093.6,434.9 L1096.0,437.4 L1098.4,439.9 L1100.9,442.3" fill="none" stroke="#d8444a" stroke-width="1.2"/>
<g clip-path="url(#cALL)">
<rect x="585.9" y="172.5" width="1.1" height="1.1" fill="#e0483a"/>
<rect x="587.7" y="171.6" width="10.4" height="1.0" fill="#3a3a3a" opacity="0.5"/>
<rect x="612.1" y="168.6" width="1.1" height="1.1" fill="#e0483a"/>
<rect x="613.9" y="167.7" width="6.2" height="1.0" fill="#3a3a3a" opacity="0.5"/>
<rect x="602.9" y="183.3" width="1.1" height="1.1" fill="#e0483a"/>
<rect x="604.7" y="182.4" width="10.9" height="1.0" fill="#3a3a3a" opacity="0.5"/>
<rect x="564.6" y="190.4" width="1.1" height="1.1" fill="#e0483a"/>
<rect x="566.4" y="189.5" width="10.6" height="1.0" fill="#3a3a3a" opacity="0.5"/>
<rect x="563.0" y="186.7" width="1.1" height="1.1" fill="#e0483a"/>
<rect x="564.8" y="185.8" width="5.1" height="1.0" fill="#3a3a3a" opacity="0.5"/>
<rect x="565.6" y="169.5" width="1.1" height="1.1" fill="#e0483a"/>
<rect x="567.4" y="168.6" width="7.8" height="1.0" fill="#3a3a3a" opacity="0.5"/>
<rect x="594.0" y="206.3" width="1.1" height="1.1" fill="#e0483a"/>
<rect x="595.8" y="205.4" width="9.9" height="1.0" fill="#3a3a3a" opacity="0.5"/>
<rect x="569.9" y="176.2" width="1.1" height="1.1" fill="#e0483a"/>
<rect x="571.7" y="175.3" width="10.8" height="1.0" fill="#3a3a3a" opacity="0.5"/>
<rect x="610.2" y="212.4" width="1.1" height="1.1" fill="#e0483a"/>
<rect x="612.0" y="211.5" width="7.7" height="1.0" fill="#3a3a3a" opacity="0.5"/>
<rect x="606.2" y="184.8" width="1.1" height="1.1" fill="#e0483a"/>
<rect x="608.0" y="183.9" width="6.6" height="1.0" fill="#3a3a3a" opacity="0.5"/>
<rect x="638.1" y="167.3" width="1.1" height="1.1" fill="#e0483a"/>
<rect x="639.9" y="166.4" width="6.3" height="1.0" fill="#3a3a3a" opacity="0.5"/>
<rect x="628.7" y="179.5" width="1.1" height="1.1" fill="#e0483a"/>
<rect x="630.5" y="178.6" width="10.7" height="1.0" fill="#3a3a3a" opacity="0.5"/>
<rect x="571.5" y="170.9" width="1.1" height="1.1" fill="#e0483a"/>
<rect x="573.3" y="170.0" width="6.3" height="1.0" fill="#3a3a3a" opacity="0.5"/>
<rect x="584.7" y="205.8" width="1.1" height="1.1" fill="#e0483a"/>
<rect x="586.5" y="204.9" width="8.5" height="1.0" fill="#3a3a3a" opacity="0.5"/>
<rect x="574.5" y="194.1" width="1.1" height="1.1" fill="#e0483a"/>
<rect x="576.3" y="193.2" width="5.9" height="1.0" fill="#3a3a3a" opacity="0.5"/>
<rect x="611.1" y="183.6" width="1.1" height="1.1" fill="#e0483a"/>
<rect x="612.9" y="182.7" width="8.1" height="1.0" fill="#3a3a3a" opacity="0.5"/>
<rect x="603.8" y="168.1" width="1.1" height="1.1" fill="#e0483a"/>
<rect x="605.6" y="167.2" width="10.7" height="1.0" fill="#3a3a3a" opacity="0.5"/>
<rect x="564.8" y="175.3" width="1.1" height="1.1" fill="#e0483a"/>
<rect x="566.6" y="174.4" width="5.8" height="1.0" fill="#3a3a3a" opacity="0.5"/>
<rect x="614.4" y="186.4" width="1.1" height="1.1" fill="#e0483a"/>
<rect x="616.2" y="185.5" width="9.9" height="1.0" fill="#3a3a3a" opacity="0.5"/>
<rect x="585.1" y="194.3" width="1.1" height="1.1" fill="#e0483a"/>
<rect x="586.9" y="193.4" width="8.1" height="1.0" fill="#3a3a3a" opacity="0.5"/>
<rect x="596.3" y="180.0" width="1.1" height="1.1" fill="#e0483a"/>
<rect x="598.1" y="179.1" width="10.3" height="1.0" fill="#3a3a3a" opacity="0.5"/>
<rect x="623.6" y="199.9" width="1.1" height="1.1" fill="#e0483a"/>
<rect x="625.4" y="199.0" width="9.2" height="1.0" fill="#3a3a3a" opacity="0.5"/>
<rect x="579.5" y="193.7" width="1.1" height="1.1" fill="#e0483a"/>
<rect x="581.3" y="192.8" width="6.4" height="1.0" fill="#3a3a3a" opacity="0.5"/>
<rect x="602.0" y="208.8" width="1.1" height="1.1" fill="#e0483a"/>
<rect x="603.8" y="207.9" width="10.4" height="1.0" fill="#3a3a3a" opacity="0.5"/>
<rect x="618.4" y="179.4" width="1.1" height="1.1" fill="#e0483a"/>
<rect x="620.2" y="178.5" width="7.9" height="1.0" fill="#3a3a3a" opacity="0.5"/>
<rect x="638.4" y="170.9" width="1.1" height="1.1" fill="#e0483a"/>
<rect x="640.2" y="170.0" width="5.1" height="1.0" fill="#3a3a3a" opacity="0.5"/>
<rect x="593.4" y="202.9" width="1.1" height="1.1" fill="#e0483a"/>
<rect x="595.2" y="202.0" width="5.0" height="1.0" fill="#3a3a3a" opacity="0.5"/>
<rect x="572.2" y="189.4" width="1.1" height="1.1" fill="#e0483a"/>
<rect x="574.0" y="188.5" width="8.0" height="1.0" fill="#3a3a3a" opacity="0.5"/>
<rect x="563.1" y="198.4" width="1.1" height="1.1" fill="#e0483a"/>
<rect x="564.9" y="197.5" width="7.7" height="1.0" fill="#3a3a3a" opacity="0.5"/>
<rect x="621.2" y="193.7" width="1.1" height="1.1" fill="#e0483a"/>
<rect x="623.0" y="192.8" width="6.8" height="1.0" fill="#3a3a3a" opacity="0.5"/>
<rect x="630.0" y="180.7" width="1.1" height="1.1" fill="#e0483a"/>
<rect x="631.8" y="179.8" width="5.8" height="1.0" fill="#3a3a3a" opacity="0.5"/>
<rect x="615.6" y="194.7" width="1.1" height="1.1" fill="#e0483a"/>
<rect x="617.4" y="193.8" width="7.1" height="1.0" fill="#3a3a3a" opacity="0.5"/>
<rect x="606.4" y="187.8" width="1.1" height="1.1" fill="#e0483a"/>
<rect x="608.2" y="186.9" width="6.9" height="1.0" fill="#3a3a3a" opacity="0.5"/>
<rect x="627.2" y="212.2" width="1.1" height="1.1" fill="#e0483a"/>
<rect x="629.0" y="211.3" width="10.0" height="1.0" fill="#3a3a3a" opacity="0.5"/>
<rect x="597.9" y="198.2" width="1.1" height="1.1" fill="#e0483a"/>
<rect x="599.7" y="197.3" width="5.0" height="1.0" fill="#3a3a3a" opacity="0.5"/>
<rect x="564.9" y="200.1" width="1.1" height="1.1" fill="#e0483a"/>
<rect x="566.7" y="199.2" width="9.5" height="1.0" fill="#3a3a3a" opacity="0.5"/>
<rect x="611.8" y="214.7" width="1.1" height="1.1" fill="#e0483a"/>
<rect x="613.6" y="213.8" width="10.0" height="1.0" fill="#3a3a3a" opacity="0.5"/>
<rect x="625.8" y="179.2" width="1.1" height="1.1" fill="#e0483a"/>
<rect x="627.6" y="178.3" width="5.7" height="1.0" fill="#3a3a3a" opacity="0.5"/>
<rect x="590.9" y="198.4" width="1.1" height="1.1" fill="#e0483a"/>
<rect x="592.7" y="197.5" width="10.6" height="1.0" fill="#3a3a3a" opacity="0.5"/>
<rect x="561.8" y="188.1" width="1.1" height="1.1" fill="#e0483a"/>
<rect x="563.6" y="187.2" width="9.3" height="1.0" fill="#3a3a3a" opacity="0.5"/>
<rect x="573.4" y="170.9" width="1.1" height="1.1" fill="#e0483a"/>
<rect x="575.2" y="170.0" width="10.4" height="1.0" fill="#3a3a3a" opacity="0.5"/>
<rect x="564.7" y="203.4" width="1.1" height="1.1" fill="#e0483a"/>
<rect x="566.5" y="202.5" width="6.7" height="1.0" fill="#3a3a3a" opacity="0.5"/>
<rect x="570.3" y="177.4" width="1.1" height="1.1" fill="#e0483a"/>
<rect x="572.1" y="176.5" width="7.2" height="1.0" fill="#3a3a3a" opacity="0.5"/>
<rect x="591.3" y="208.6" width="1.1" height="1.1" fill="#e0483a"/>
<rect x="593.1" y="207.7" width="7.4" height="1.0" fill="#3a3a3a" opacity="0.5"/>
<rect x="566.4" y="187.5" width="1.1" height="1.1" fill="#e0483a"/>
<rect x="568.2" y="186.6" width="11.0" height="1.0" fill="#3a3a3a" opacity="0.5"/>
<rect x="604.0" y="209.2" width="1.1" height="1.1" fill="#e0483a"/>
<rect x="605.8" y="208.3" width="8.5" height="1.0" fill="#3a3a3a" opacity="0.5"/>
<rect x="625.5" y="208.2" width="1.1" height="1.1" fill="#e0483a"/>
<rect x="627.3" y="207.3" width="7.2" height="1.0" fill="#3a3a3a" opacity="0.5"/>
<rect x="582.3" y="185.8" width="1.1" height="1.1" fill="#e0483a"/>
<rect x="584.1" y="184.9" width="7.6" height="1.0" fill="#3a3a3a" opacity="0.5"/>
<rect x="588.7" y="209.2" width="1.1" height="1.1" fill="#e0483a"/>
<rect x="590.5" y="208.3" width="6.7" height="1.0" fill="#3a3a3a" opacity="0.5"/>
<rect x="636.6" y="172.5" width="1.1" height="1.1" fill="#e0483a"/>
<rect x="638.4" y="171.6" width="5.3" height="1.0" fill="#3a3a3a" opacity="0.5"/>
<rect x="574.1" y="176.6" width="1.1" height="1.1" fill="#e0483a"/>
<rect x="575.9" y="175.7" width="5.6" height="1.0" fill="#3a3a3a" opacity="0.5"/>
<rect x="578.7" y="189.2" width="1.1" height="1.1" fill="#e0483a"/>
<rect x="580.5" y="188.3" width="10.0" height="1.0" fill="#3a3a3a" opacity="0.5"/>
<rect x="607.1" y="178.1" width="1.1" height="1.1" fill="#e0483a"/>
<rect x="608.9" y="177.2" width="6.7" height="1.0" fill="#3a3a3a" opacity="0.5"/>
<rect x="560.3" y="185.9" width="1.1" height="1.1" fill="#e0483a"/>
<rect x="562.1" y="185.0" width="10.6" height="1.0" fill="#3a3a3a" opacity="0.5"/>
<rect x="589.5" y="193.3" width="1.1" height="1.1" fill="#e0483a"/>
<rect x="591.3" y="192.4" width="6.5" height="1.0" fill="#3a3a3a" opacity="0.5"/>
<rect x="636.2" y="199.5" width="1.1" height="1.1" fill="#e0483a"/>
<rect x="638.0" y="198.6" width="6.6" height="1.0" fill="#3a3a3a" opacity="0.5"/>
<rect x="601.2" y="195.9" width="1.1" height="1.1" fill="#e0483a"/>
<rect x="603.0" y="195.0" width="8.1" height="1.0" fill="#3a3a3a" opacity="0.5"/>
<rect x="614.1" y="167.7" width="1.1" height="1.1" fill="#e0483a"/>
<rect x="615.9" y="166.8" width="6.1" height="1.0" fill="#3a3a3a" opacity="0.5"/>
<rect x="632.0" y="204.0" width="1.1" height="1.1" fill="#e0483a"/>
<rect x="633.8" y="203.1" width="7.2" height="1.0" fill="#3a3a3a" opacity="0.5"/>
<rect x="630.0" y="204.9" width="1.1" height="1.1" fill="#e0483a"/>
<rect x="631.8" y="204.0" width="10.7" height="1.0" fill="#3a3a3a" opacity="0.5"/>
<rect x="554.6" y="206.0" width="1.1" height="1.1" fill="#e0483a"/>
<rect x="556.4" y="205.1" width="10.3" height="1.0" fill="#3a3a3a" opacity="0.5"/>
<rect x="540.2" y="215.4" width="1.1" height="1.1" fill="#e0483a"/>
<rect x="542.0" y="214.5" width="9.9" height="1.0" fill="#3a3a3a" opacity="0.5"/>
<rect x="538.1" y="192.7" width="1.1" height="1.1" fill="#e0483a"/>
<rect x="539.9" y="191.8" width="8.8" height="1.0" fill="#3a3a3a" opacity="0.5"/>
<rect x="545.4" y="196.5" width="1.1" height="1.1" fill="#e0483a"/>
<rect x="547.2" y="195.6" width="10.5" height="1.0" fill="#3a3a3a" opacity="0.5"/>
<rect x="552.0" y="192.1" width="1.1" height="1.1" fill="#e0483a"/>
<rect x="553.8" y="191.2" width="10.6" height="1.0" fill="#3a3a3a" opacity="0.5"/>
<rect x="535.0" y="196.1" width="1.1" height="1.1" fill="#e0483a"/>
<rect x="536.8" y="195.2" width="8.3" height="1.0" fill="#3a3a3a" opacity="0.5"/>
<rect x="540.1" y="204.5" width="1.1" height="1.1" fill="#e0483a"/>
<rect x="541.9" y="203.6" width="9.3" height="1.0" fill="#3a3a3a" opacity="0.5"/>
<rect x="536.3" y="225.0" width="1.1" height="1.1" fill="#e0483a"/>
<rect x="538.1" y="224.1" width="5.3" height="1.0" fill="#3a3a3a" opacity="0.5"/>
<rect x="565.7" y="195.9" width="1.1" height="1.1" fill="#e0483a"/>
<rect x="567.5" y="195.0" width="9.4" height="1.0" fill="#3a3a3a" opacity="0.5"/>
<rect x="547.6" y="203.9" width="1.1" height="1.1" fill="#e0483a"/>
<rect x="549.4" y="203.0" width="7.7" height="1.0" fill="#3a3a3a" opacity="0.5"/>
<rect x="553.2" y="194.9" width="1.1" height="1.1" fill="#e0483a"/>
<rect x="555.0" y="194.0" width="9.5" height="1.0" fill="#3a3a3a" opacity="0.5"/>
<rect x="577.4" y="229.7" width="1.1" height="1.1" fill="#e0483a"/>
<rect x="579.2" y="228.8" width="8.9" height="1.0" fill="#3a3a3a" opacity="0.5"/>
<rect x="558.3" y="209.4" width="1.1" height="1.1" fill="#e0483a"/>
<rect x="560.1" y="208.5" width="6.7" height="1.0" fill="#3a3a3a" opacity="0.5"/>
<rect x="539.3" y="194.1" width="1.1" height="1.1" fill="#e0483a"/>
<rect x="541.1" y="193.2" width="5.3" height="1.0" fill="#3a3a3a" opacity="0.5"/>
<rect x="552.1" y="200.6" width="1.1" height="1.1" fill="#e0483a"/>
<rect x="553.9" y="199.7" width="10.6" height="1.0" fill="#3a3a3a" opacity="0.5"/>
<rect x="576.4" y="196.5" width="1.1" height="1.1" fill="#e0483a"/>
<rect x="578.2" y="195.6" width="5.8" height="1.0" fill="#3a3a3a" opacity="0.5"/>
<rect x="536.2" y="228.0" width="1.1" height="1.1" fill="#e0483a"/>
<rect x="538.0" y="227.1" width="7.8" height="1.0" fill="#3a3a3a" opacity="0.5"/>
<rect x="561.4" y="195.9" width="1.1" height="1.1" fill="#e0483a"/>
<rect x="563.2" y="195.0" width="7.1" height="1.0" fill="#3a3a3a" opacity="0.5"/>
<rect x="562.2" y="191.1" width="1.1" height="1.1" fill="#e0483a"/>
<rect x="564.0" y="190.2" width="6.8" height="1.0" fill="#3a3a3a" opacity="0.5"/>
<rect x="561.4" y="229.1" width="1.1" height="1.1" fill="#e0483a"/>
<rect x="563.2" y="228.2" width="9.4" height="1.0" fill="#3a3a3a" opacity="0.5"/>
<rect x="679.1" y="237.8" width="1.1" height="1.1" fill="#e0483a"/>
<rect x="680.9" y="236.9" width="10.9" height="1.0" fill="#3a3a3a" opacity="0.5"/>
<rect x="630.9" y="224.7" width="1.1" height="1.1" fill="#e0483a"/>
<rect x="632.7" y="223.8" width="6.6" height="1.0" fill="#3a3a3a" opacity="0.5"/>
<rect x="623.4" y="240.9" width="1.1" height="1.1" fill="#e0483a"/>
<rect x="625.2" y="240.0" width="8.9" height="1.0" fill="#3a3a3a" opacity="0.5"/>
<rect x="652.6" y="241.2" width="1.1" height="1.1" fill="#e0483a"/>
<rect x="654.4" y="240.3" width="6.8" height="1.0" fill="#3a3a3a" opacity="0.5"/>
<rect x="636.4" y="218.9" width="1.1" height="1.1" fill="#e0483a"/>
<rect x="638.2" y="218.0" width="8.3" height="1.0" fill="#3a3a3a" opacity="0.5"/>
<rect x="674.9" y="249.4" width="1.1" height="1.1" fill="#e0483a"/>
<rect x="676.7" y="248.5" width="7.4" height="1.0" fill="#3a3a3a" opacity="0.5"/>
<rect x="678.2" y="242.2" width="1.1" height="1.1" fill="#e0483a"/>
<rect x="680.0" y="241.3" width="6.0" height="1.0" fill="#3a3a3a" opacity="0.5"/>
<rect x="675.5" y="239.6" width="1.1" height="1.1" fill="#e0483a"/>
<rect x="677.3" y="238.7" width="6.0" height="1.0" fill="#3a3a3a" opacity="0.5"/>
<rect x="628.1" y="230.7" width="1.1" height="1.1" fill="#e0483a"/>
<rect x="629.9" y="229.8" width="6.2" height="1.0" fill="#3a3a3a" opacity="0.5"/>
<rect x="638.4" y="211.2" width="1.1" height="1.1" fill="#e0483a"/>
<rect x="640.2" y="210.3" width="10.4" height="1.0" fill="#3a3a3a" opacity="0.5"/>
<rect x="612.2" y="221.2" width="1.1" height="1.1" fill="#e0483a"/>
<rect x="614.0" y="220.3" width="8.0" height="1.0" fill="#3a3a3a" opacity="0.5"/>
<rect x="630.7" y="237.7" width="1.1" height="1.1" fill="#e0483a"/>
<rect x="632.5" y="236.8" width="6.3" height="1.0" fill="#3a3a3a" opacity="0.5"/>
<rect x="686.5" y="227.9" width="1.1" height="1.1" fill="#e0483a"/>
<rect x="688.3" y="227.0" width="10.4" height="1.0" fill="#3a3a3a" opacity="0.5"/>
<rect x="685.0" y="249.5" width="1.1" height="1.1" fill="#e0483a"/>
<rect x="686.8" y="248.6" width="11.0" height="1.0" fill="#3a3a3a" opacity="0.5"/>
<rect x="686.4" y="224.6" width="1.1" height="1.1" fill="#e0483a"/>
<rect x="688.2" y="223.7" width="7.7" height="1.0" fill="#3a3a3a" opacity="0.5"/>
<rect x="627.6" y="219.1" width="1.1" height="1.1" fill="#e0483a"/>
<rect x="629.4" y="218.2" width="5.8" height="1.0" fill="#3a3a3a" opacity="0.5"/>
<rect x="625.7" y="218.2" width="1.1" height="1.1" fill="#e0483a"/>
<rect x="627.5" y="217.3" width="6.2" height="1.0" fill="#3a3a3a" opacity="0.5"/>
<rect x="659.9" y="246.0" width="1.1" height="1.1" fill="#e0483a"/>
<rect x="661.7" y="245.1" width="5.5" height="1.0" fill="#3a3a3a" opacity="0.5"/>
<rect x="677.2" y="229.2" width="1.1" height="1.1" fill="#e0483a"/>
<rect x="679.0" y="228.3" width="7.1" height="1.0" fill="#3a3a3a" opacity="0.5"/>
<rect x="662.2" y="242.0" width="1.1" height="1.1" fill="#e0483a"/>
<rect x="664.0" y="241.1" width="5.5" height="1.0" fill="#3a3a3a" opacity="0.5"/>
<rect x="616.8" y="236.4" width="1.1" height="1.1" fill="#e0483a"/>
<rect x="618.6" y="235.5" width="6.4" height="1.0" fill="#3a3a3a" opacity="0.5"/>
<rect x="682.8" y="241.3" width="1.1" height="1.1" fill="#e0483a"/>
<rect x="684.6" y="240.4" width="6.6" height="1.0" fill="#3a3a3a" opacity="0.5"/>
<rect x="670.0" y="229.1" width="1.1" height="1.1" fill="#e0483a"/>
<rect x="671.8" y="228.2" width="8.4" height="1.0" fill="#3a3a3a" opacity="0.5"/>
<rect x="624.3" y="241.6" width="1.1" height="1.1" fill="#e0483a"/>
<rect x="626.1" y="240.7" width="10.3" height="1.0" fill="#3a3a3a" opacity="0.5"/>
<rect x="636.6" y="242.0" width="1.1" height="1.1" fill="#e0483a"/>
<rect x="638.4" y="241.1" width="9.5" height="1.0" fill="#3a3a3a" opacity="0.5"/>
<rect x="616.6" y="393.8" width="1.1" height="1.1" fill="#e0483a"/>
<rect x="618.4" y="392.9" width="7.5" height="1.0" fill="#3a3a3a" opacity="0.5"/>
<rect x="548.2" y="426.8" width="1.1" height="1.1" fill="#e0483a"/>
<rect x="550.0" y="425.9" width="7.5" height="1.0" fill="#3a3a3a" opacity="0.5"/>
<rect x="587.0" y="380.2" width="1.1" height="1.1" fill="#e0483a"/>
<rect x="588.8" y="379.3" width="8.1" height="1.0" fill="#3a3a3a" opacity="0.5"/>
<rect x="515.2" y="379.1" width="1.1" height="1.1" fill="#e0483a"/>
<rect x="517.0" y="378.2" width="7.3" height="1.0" fill="#3a3a3a" opacity="0.5"/>
<rect x="608.6" y="418.4" width="1.1" height="1.1" fill="#e0483a"/>
<rect x="610.4" y="417.5" width="7.0" height="1.0" fill="#3a3a3a" opacity="0.5"/>
<rect x="517.5" y="419.6" width="1.1" height="1.1" fill="#e0483a"/>
<rect x="519.3" y="418.7" width="5.4" height="1.0" fill="#3a3a3a" opacity="0.5"/>
<rect x="617.6" y="409.4" width="1.1" height="1.1" fill="#e0483a"/>
<rect x="619.4" y="408.5" width="6.7" height="1.0" fill="#3a3a3a" opacity="0.5"/>
<rect x="542.0" y="402.9" width="1.1" height="1.1" fill="#e0483a"/>
<rect x="543.8" y="402.0" width="10.8" height="1.0" fill="#3a3a3a" opacity="0.5"/>
<rect x="515.7" y="370.9" width="1.1" height="1.1" fill="#e0483a"/>
<rect x="517.5" y="370.0" width="5.8" height="1.0" fill="#3a3a3a" opacity="0.5"/>
<rect x="616.5" y="409.0" width="1.1" height="1.1" fill="#e0483a"/>
<rect x="618.3" y="408.1" width="8.0" height="1.0" fill="#3a3a3a" opacity="0.5"/>
<rect x="563.2" y="426.0" width="1.1" height="1.1" fill="#e0483a"/>
<rect x="565.0" y="425.1" width="8.8" height="1.0" fill="#3a3a3a" opacity="0.5"/>
<rect x="552.1" y="422.3" width="1.1" height="1.1" fill="#e0483a"/>
<rect x="553.9" y="421.4" width="10.2" height="1.0" fill="#3a3a3a" opacity="0.5"/>
<rect x="599.1" y="382.7" width="1.1" height="1.1" fill="#e0483a"/>
<rect x="600.9" y="381.8" width="6.3" height="1.0" fill="#3a3a3a" opacity="0.5"/>
<rect x="530.2" y="387.6" width="1.1" height="1.1" fill="#e0483a"/>
<rect x="532.0" y="386.7" width="6.6" height="1.0" fill="#3a3a3a" opacity="0.5"/>
<rect x="528.9" y="405.2" width="1.1" height="1.1" fill="#e0483a"/>
<rect x="530.7" y="404.3" width="6.5" height="1.0" fill="#3a3a3a" opacity="0.5"/>
<rect x="531.1" y="395.1" width="1.1" height="1.1" fill="#e0483a"/>
<rect x="532.9" y="394.2" width="7.4" height="1.0" fill="#3a3a3a" opacity="0.5"/>
<rect x="515.7" y="424.6" width="1.1" height="1.1" fill="#e0483a"/>
<rect x="517.5" y="423.7" width="7.7" height="1.0" fill="#3a3a3a" opacity="0.5"/>
<rect x="542.5" y="397.5" width="1.1" height="1.1" fill="#e0483a"/>
<rect x="544.3" y="396.6" width="10.7" height="1.0" fill="#3a3a3a" opacity="0.5"/>
<rect x="570.0" y="424.3" width="1.1" height="1.1" fill="#e0483a"/>
<rect x="571.8" y="423.4" width="10.1" height="1.0" fill="#3a3a3a" opacity="0.5"/>
<rect x="550.5" y="425.1" width="1.1" height="1.1" fill="#e0483a"/>
<rect x="552.3" y="424.2" width="10.2" height="1.0" fill="#3a3a3a" opacity="0.5"/>
<rect x="560.2" y="401.9" width="1.1" height="1.1" fill="#e0483a"/>
<rect x="562.0" y="401.0" width="5.1" height="1.0" fill="#3a3a3a" opacity="0.5"/>
<rect x="562.8" y="371.1" width="1.1" height="1.1" fill="#e0483a"/>
<rect x="564.6" y="370.2" width="5.2" height="1.0" fill="#3a3a3a" opacity="0.5"/>
<rect x="552.8" y="381.0" width="1.1" height="1.1" fill="#e0483a"/>
<rect x="554.6" y="380.1" width="9.3" height="1.0" fill="#3a3a3a" opacity="0.5"/>
<rect x="500.5" y="418.0" width="1.1" height="1.1" fill="#e0483a"/>
<rect x="502.3" y="417.1" width="10.4" height="1.0" fill="#3a3a3a" opacity="0.5"/>
<rect x="520.7" y="398.4" width="1.1" height="1.1" fill="#e0483a"/>
<rect x="522.5" y="397.5" width="7.8" height="1.0" fill="#3a3a3a" opacity="0.5"/>
<rect x="587.0" y="403.4" width="1.1" height="1.1" fill="#e0483a"/>
<rect x="588.8" y="402.5" width="8.5" height="1.0" fill="#3a3a3a" opacity="0.5"/>
<rect x="539.1" y="401.1" width="1.1" height="1.1" fill="#e0483a"/>
<rect x="540.9" y="400.2" width="5.0" height="1.0" fill="#3a3a3a" opacity="0.5"/>
<rect x="566.7" y="417.1" width="1.1" height="1.1" fill="#e0483a"/>
<rect x="568.5" y="416.2" width="7.3" height="1.0" fill="#3a3a3a" opacity="0.5"/>
<rect x="512.7" y="403.6" width="1.1" height="1.1" fill="#e0483a"/>
<rect x="514.5" y="402.7" width="10.6" height="1.0" fill="#3a3a3a" opacity="0.5"/>
<rect x="529.8" y="386.6" width="1.1" height="1.1" fill="#e0483a"/>
<rect x="531.6" y="385.7" width="10.0" height="1.0" fill="#3a3a3a" opacity="0.5"/>
<rect x="641.8" y="430.8" width="1.1" height="1.1" fill="#e0483a"/>
<rect x="643.6" y="429.9" width="10.1" height="1.0" fill="#3a3a3a" opacity="0.5"/>
<rect x="624.9" y="456.0" width="1.1" height="1.1" fill="#e0483a"/>
<rect x="626.7" y="455.1" width="10.8" height="1.0" fill="#3a3a3a" opacity="0.5"/>
<rect x="653.0" y="424.3" width="1.1" height="1.1" fill="#e0483a"/>
<rect x="654.8" y="423.4" width="6.5" height="1.0" fill="#3a3a3a" opacity="0.5"/>
<rect x="629.0" y="430.6" width="1.1" height="1.1" fill="#e0483a"/>
<rect x="630.8" y="429.7" width="5.7" height="1.0" fill="#3a3a3a" opacity="0.5"/>
<rect x="621.0" y="449.3" width="1.1" height="1.1" fill="#e0483a"/>
<rect x="622.8" y="448.4" width="5.9" height="1.0" fill="#3a3a3a" opacity="0.5"/>
<rect x="616.2" y="433.3" width="1.1" height="1.1" fill="#e0483a"/>
<rect x="618.0" y="432.4" width="8.1" height="1.0" fill="#3a3a3a" opacity="0.5"/>
<rect x="618.2" y="474.2" width="1.1" height="1.1" fill="#e0483a"/>
<rect x="620.0" y="473.3" width="9.1" height="1.0" fill="#3a3a3a" opacity="0.5"/>
<rect x="635.9" y="467.7" width="1.1" height="1.1" fill="#e0483a"/>
<rect x="637.7" y="466.8" width="10.6" height="1.0" fill="#3a3a3a" opacity="0.5"/>
<rect x="655.4" y="406.0" width="1.1" height="1.1" fill="#e0483a"/>
<rect x="657.2" y="405.1" width="9.3" height="1.0" fill="#3a3a3a" opacity="0.5"/>
<rect x="624.8" y="474.3" width="1.1" height="1.1" fill="#e0483a"/>
<rect x="626.6" y="473.4" width="8.9" height="1.0" fill="#3a3a3a" opacity="0.5"/>
<rect x="647.2" y="393.7" width="1.1" height="1.1" fill="#e0483a"/>
<rect x="649.0" y="392.8" width="9.6" height="1.0" fill="#3a3a3a" opacity="0.5"/>
<rect x="589.7" y="424.2" width="1.1" height="1.1" fill="#e0483a"/>
<rect x="591.5" y="423.3" width="7.7" height="1.0" fill="#3a3a3a" opacity="0.5"/>
<rect x="585.8" y="404.1" width="1.1" height="1.1" fill="#e0483a"/>
<rect x="587.6" y="403.2" width="8.3" height="1.0" fill="#3a3a3a" opacity="0.5"/>
<rect x="585.8" y="446.9" width="1.1" height="1.1" fill="#e0483a"/>
<rect x="587.6" y="446.0" width="5.2" height="1.0" fill="#3a3a3a" opacity="0.5"/>
<rect x="642.7" y="469.7" width="1.1" height="1.1" fill="#e0483a"/>
<rect x="644.5" y="468.8" width="9.7" height="1.0" fill="#3a3a3a" opacity="0.5"/>
<rect x="592.4" y="451.6" width="1.1" height="1.1" fill="#e0483a"/>
<rect x="594.2" y="450.7" width="6.4" height="1.0" fill="#3a3a3a" opacity="0.5"/>
<rect x="632.8" y="394.3" width="1.1" height="1.1" fill="#e0483a"/>
<rect x="634.6" y="393.4" width="10.5" height="1.0" fill="#3a3a3a" opacity="0.5"/>
<rect x="650.6" y="476.8" width="1.1" height="1.1" fill="#e0483a"/>
<rect x="652.4" y="475.9" width="8.9" height="1.0" fill="#3a3a3a" opacity="0.5"/>
<rect x="597.6" y="475.3" width="1.1" height="1.1" fill="#e0483a"/>
<rect x="599.4" y="474.4" width="6.8" height="1.0" fill="#3a3a3a" opacity="0.5"/>
<rect x="611.9" y="428.7" width="1.1" height="1.1" fill="#e0483a"/>
<rect x="613.7" y="427.8" width="5.8" height="1.0" fill="#3a3a3a" opacity="0.5"/>
<rect x="659.2" y="463.2" width="1.1" height="1.1" fill="#e0483a"/>
<rect x="661.0" y="462.3" width="6.5" height="1.0" fill="#3a3a3a" opacity="0.5"/>
<rect x="592.9" y="423.2" width="1.1" height="1.1" fill="#e0483a"/>
<rect x="594.7" y="422.3" width="8.8" height="1.0" fill="#3a3a3a" opacity="0.5"/>
<rect x="621.2" y="413.9" width="1.1" height="1.1" fill="#e0483a"/>
<rect x="623.0" y="413.0" width="9.2" height="1.0" fill="#3a3a3a" opacity="0.5"/>
<rect x="595.7" y="411.9" width="1.1" height="1.1" fill="#e0483a"/>
<rect x="597.5" y="411.0" width="5.7" height="1.0" fill="#3a3a3a" opacity="0.5"/>
<rect x="637.8" y="381.9" width="1.1" height="1.1" fill="#e0483a"/>
<rect x="639.6" y="381.0" width="5.4" height="1.0" fill="#3a3a3a" opacity="0.5"/>
<rect x="809.7" y="255.2" width="1.1" height="1.1" fill="#e0483a"/>
<rect x="811.5" y="254.3" width="8.1" height="1.0" fill="#3a3a3a" opacity="0.5"/>
<rect x="713.3" y="246.5" width="1.1" height="1.1" fill="#e0483a"/>
<rect x="715.1" y="245.6" width="8.5" height="1.0" fill="#3a3a3a" opacity="0.5"/>
<rect x="822.3" y="261.0" width="1.1" height="1.1" fill="#e0483a"/>
<rect x="824.1" y="260.1" width="7.3" height="1.0" fill="#3a3a3a" opacity="0.5"/>
<rect x="721.6" y="298.8" width="1.1" height="1.1" fill="#e0483a"/>
<rect x="723.4" y="297.9" width="6.3" height="1.0" fill="#3a3a3a" opacity="0.5"/>
<rect x="851.9" y="297.7" width="1.1" height="1.1" fill="#e0483a"/>
<rect x="853.7" y="296.8" width="8.6" height="1.0" fill="#3a3a3a" opacity="0.5"/>
<rect x="728.9" y="241.2" width="1.1" height="1.1" fill="#e0483a"/>
<rect x="730.7" y="240.3" width="5.1" height="1.0" fill="#3a3a3a" opacity="0.5"/>
<rect x="717.1" y="282.3" width="1.1" height="1.1" fill="#e0483a"/>
<rect x="718.9" y="281.4" width="6.8" height="1.0" fill="#3a3a3a" opacity="0.5"/>
<rect x="758.7" y="230.4" width="1.1" height="1.1" fill="#e0483a"/>
<rect x="760.5" y="229.5" width="7.8" height="1.0" fill="#3a3a3a" opacity="0.5"/>
<rect x="786.0" y="292.9" width="1.1" height="1.1" fill="#e0483a"/>
<rect x="787.8" y="292.0" width="10.8" height="1.0" fill="#3a3a3a" opacity="0.5"/>
<rect x="857.4" y="240.7" width="1.1" height="1.1" fill="#e0483a"/>
<rect x="859.2" y="239.8" width="8.9" height="1.0" fill="#3a3a3a" opacity="0.5"/>
<rect x="736.9" y="293.5" width="1.1" height="1.1" fill="#e0483a"/>
<rect x="738.7" y="292.6" width="10.3" height="1.0" fill="#3a3a3a" opacity="0.5"/>
<rect x="812.7" y="276.0" width="1.1" height="1.1" fill="#e0483a"/>
<rect x="814.5" y="275.1" width="7.9" height="1.0" fill="#3a3a3a" opacity="0.5"/>
<rect x="726.1" y="224.6" width="1.1" height="1.1" fill="#e0483a"/>
<rect x="727.9" y="223.7" width="6.4" height="1.0" fill="#3a3a3a" opacity="0.5"/>
<rect x="833.9" y="254.0" width="1.1" height="1.1" fill="#e0483a"/>
<rect x="835.7" y="253.1" width="6.5" height="1.0" fill="#3a3a3a" opacity="0.5"/>
<rect x="723.0" y="295.1" width="1.1" height="1.1" fill="#e0483a"/>
<rect x="724.8" y="294.2" width="10.8" height="1.0" fill="#3a3a3a" opacity="0.5"/>
<rect x="824.2" y="284.1" width="1.1" height="1.1" fill="#e0483a"/>
<rect x="826.0" y="283.2" width="9.2" height="1.0" fill="#3a3a3a" opacity="0.5"/>
<rect x="725.1" y="288.5" width="1.1" height="1.1" fill="#e0483a"/>
<rect x="726.9" y="287.6" width="6.8" height="1.0" fill="#3a3a3a" opacity="0.5"/>
<rect x="722.0" y="289.0" width="1.1" height="1.1" fill="#e0483a"/>
<rect x="723.8" y="288.1" width="5.1" height="1.0" fill="#3a3a3a" opacity="0.5"/>
<rect x="791.7" y="247.1" width="1.1" height="1.1" fill="#e0483a"/>
<rect x="793.5" y="246.2" width="8.0" height="1.0" fill="#3a3a3a" opacity="0.5"/>
<rect x="809.6" y="294.1" width="1.1" height="1.1" fill="#e0483a"/>
<rect x="811.4" y="293.2" width="9.0" height="1.0" fill="#3a3a3a" opacity="0.5"/>
<rect x="758.2" y="230.3" width="1.1" height="1.1" fill="#e0483a"/>
<rect x="760.0" y="229.4" width="7.5" height="1.0" fill="#3a3a3a" opacity="0.5"/>
<rect x="804.8" y="239.1" width="1.1" height="1.1" fill="#e0483a"/>
<rect x="806.6" y="238.2" width="6.5" height="1.0" fill="#3a3a3a" opacity="0.5"/>
<rect x="729.7" y="232.9" width="1.1" height="1.1" fill="#e0483a"/>
<rect x="731.5" y="232.0" width="9.0" height="1.0" fill="#3a3a3a" opacity="0.5"/>
<rect x="719.1" y="236.1" width="1.1" height="1.1" fill="#e0483a"/>
<rect x="720.9" y="235.2" width="10.6" height="1.0" fill="#3a3a3a" opacity="0.5"/>
<rect x="766.2" y="244.4" width="1.1" height="1.1" fill="#e0483a"/>
<rect x="768.0" y="243.5" width="6.4" height="1.0" fill="#3a3a3a" opacity="0.5"/>
<rect x="846.7" y="243.2" width="1.1" height="1.1" fill="#e0483a"/>
<rect x="848.5" y="242.3" width="5.2" height="1.0" fill="#3a3a3a" opacity="0.5"/>
<rect x="800.0" y="234.2" width="1.1" height="1.1" fill="#e0483a"/>
<rect x="801.8" y="233.3" width="7.0" height="1.0" fill="#3a3a3a" opacity="0.5"/>
<rect x="772.5" y="221.5" width="1.1" height="1.1" fill="#e0483a"/>
<rect x="774.3" y="220.6" width="7.5" height="1.0" fill="#3a3a3a" opacity="0.5"/>
<rect x="755.1" y="221.2" width="1.1" height="1.1" fill="#e0483a"/>
<rect x="756.9" y="220.3" width="9.1" height="1.0" fill="#3a3a3a" opacity="0.5"/>
<rect x="842.0" y="264.1" width="1.1" height="1.1" fill="#e0483a"/>
<rect x="843.8" y="263.2" width="6.2" height="1.0" fill="#3a3a3a" opacity="0.5"/>
<rect x="828.9" y="299.0" width="1.1" height="1.1" fill="#e0483a"/>
<rect x="830.7" y="298.1" width="9.8" height="1.0" fill="#3a3a3a" opacity="0.5"/>
<rect x="903.5" y="284.3" width="1.1" height="1.1" fill="#e0483a"/>
<rect x="905.3" y="283.4" width="9.4" height="1.0" fill="#3a3a3a" opacity="0.5"/>
<rect x="891.9" y="297.3" width="1.1" height="1.1" fill="#e0483a"/>
<rect x="893.7" y="296.4" width="8.0" height="1.0" fill="#3a3a3a" opacity="0.5"/>
<rect x="859.5" y="313.4" width="1.1" height="1.1" fill="#e0483a"/>
<rect x="861.3" y="312.5" width="6.2" height="1.0" fill="#3a3a3a" opacity="0.5"/>
<rect x="849.3" y="300.3" width="1.1" height="1.1" fill="#e0483a"/>
<rect x="851.1" y="299.4" width="10.8" height="1.0" fill="#3a3a3a" opacity="0.5"/>
<rect x="878.8" y="319.3" width="1.1" height="1.1" fill="#e0483a"/>
<rect x="880.6" y="318.4" width="6.9" height="1.0" fill="#3a3a3a" opacity="0.5"/>
<rect x="844.3" y="313.3" width="1.1" height="1.1" fill="#e0483a"/>
<rect x="846.1" y="312.4" width="9.9" height="1.0" fill="#3a3a3a" opacity="0.5"/>
<rect x="880.7" y="305.4" width="1.1" height="1.1" fill="#e0483a"/>
<rect x="882.5" y="304.5" width="6.4" height="1.0" fill="#3a3a3a" opacity="0.5"/>
<rect x="850.5" y="293.9" width="1.1" height="1.1" fill="#e0483a"/>
<rect x="852.3" y="293.0" width="6.3" height="1.0" fill="#3a3a3a" opacity="0.5"/>
<rect x="815.4" y="285.2" width="1.1" height="1.1" fill="#e0483a"/>
<rect x="817.2" y="284.3" width="9.6" height="1.0" fill="#3a3a3a" opacity="0.5"/>
<rect x="817.1" y="309.6" width="1.1" height="1.1" fill="#e0483a"/>
<rect x="818.9" y="308.7" width="6.8" height="1.0" fill="#3a3a3a" opacity="0.5"/>
<rect x="835.6" y="286.5" width="1.1" height="1.1" fill="#e0483a"/>
<rect x="837.4" y="285.6" width="10.7" height="1.0" fill="#3a3a3a" opacity="0.5"/>
<rect x="818.4" y="313.7" width="1.1" height="1.1" fill="#e0483a"/>
<rect x="820.2" y="312.8" width="8.0" height="1.0" fill="#3a3a3a" opacity="0.5"/>
<rect x="897.1" y="306.8" width="1.1" height="1.1" fill="#e0483a"/>
<rect x="898.9" y="305.9" width="6.1" height="1.0" fill="#3a3a3a" opacity="0.5"/>
<rect x="838.2" y="289.7" width="1.1" height="1.1" fill="#e0483a"/>
<rect x="840.0" y="288.8" width="6.3" height="1.0" fill="#3a3a3a" opacity="0.5"/>
<rect x="303.4" y="395.1" width="1.1" height="1.1" fill="#e0483a"/>
<rect x="305.2" y="394.2" width="7.5" height="1.0" fill="#3a3a3a" opacity="0.5"/>
<rect x="292.6" y="393.5" width="1.1" height="1.1" fill="#e0483a"/>
<rect x="294.4" y="392.6" width="9.0" height="1.0" fill="#3a3a3a" opacity="0.5"/>
<rect x="301.1" y="455.4" width="1.1" height="1.1" fill="#e0483a"/>
<rect x="302.9" y="454.5" width="10.7" height="1.0" fill="#3a3a3a" opacity="0.5"/>
<rect x="357.8" y="405.6" width="1.1" height="1.1" fill="#e0483a"/>
<rect x="359.6" y="404.7" width="5.9" height="1.0" fill="#3a3a3a" opacity="0.5"/>
<rect x="299.6" y="455.9" width="1.1" height="1.1" fill="#e0483a"/>
<rect x="301.4" y="455.0" width="7.4" height="1.0" fill="#3a3a3a" opacity="0.5"/>
<rect x="304.8" y="382.8" width="1.1" height="1.1" fill="#e0483a"/>
<rect x="306.6" y="381.9" width="6.3" height="1.0" fill="#3a3a3a" opacity="0.5"/>
<rect x="280.1" y="385.8" width="1.1" height="1.1" fill="#e0483a"/>
<rect x="281.9" y="384.9" width="10.8" height="1.0" fill="#3a3a3a" opacity="0.5"/>
<rect x="318.0" y="400.3" width="1.1" height="1.1" fill="#e0483a"/>
<rect x="319.8" y="399.4" width="5.9" height="1.0" fill="#3a3a3a" opacity="0.5"/>
<rect x="296.1" y="400.6" width="1.1" height="1.1" fill="#e0483a"/>
<rect x="297.9" y="399.7" width="5.3" height="1.0" fill="#3a3a3a" opacity="0.5"/>
<rect x="280.4" y="371.7" width="1.1" height="1.1" fill="#e0483a"/>
<rect x="282.2" y="370.8" width="5.4" height="1.0" fill="#3a3a3a" opacity="0.5"/>
<rect x="287.2" y="387.9" width="1.1" height="1.1" fill="#e0483a"/>
<rect x="289.0" y="387.0" width="7.4" height="1.0" fill="#3a3a3a" opacity="0.5"/>
<rect x="283.3" y="342.7" width="1.1" height="1.1" fill="#e0483a"/>
<rect x="285.1" y="341.8" width="10.4" height="1.0" fill="#3a3a3a" opacity="0.5"/>
<rect x="304.3" y="367.9" width="1.1" height="1.1" fill="#e0483a"/>
<rect x="306.1" y="367.0" width="10.3" height="1.0" fill="#3a3a3a" opacity="0.5"/>
<rect x="326.8" y="403.5" width="1.1" height="1.1" fill="#e0483a"/>
<rect x="328.6" y="402.6" width="9.4" height="1.0" fill="#3a3a3a" opacity="0.5"/>
<rect x="340.0" y="418.9" width="1.1" height="1.1" fill="#e0483a"/>
<rect x="341.8" y="418.0" width="11.0" height="1.0" fill="#3a3a3a" opacity="0.5"/>
<rect x="337.3" y="445.5" width="1.1" height="1.1" fill="#e0483a"/>
<rect x="339.1" y="444.6" width="10.6" height="1.0" fill="#3a3a3a" opacity="0.5"/>
<rect x="311.2" y="379.1" width="1.1" height="1.1" fill="#e0483a"/>
<rect x="313.0" y="378.2" width="7.0" height="1.0" fill="#3a3a3a" opacity="0.5"/>
<rect x="358.8" y="357.9" width="1.1" height="1.1" fill="#e0483a"/>
<rect x="360.6" y="357.0" width="6.1" height="1.0" fill="#3a3a3a" opacity="0.5"/>
<rect x="337.9" y="417.2" width="1.1" height="1.1" fill="#e0483a"/>
<rect x="339.7" y="416.3" width="10.6" height="1.0" fill="#3a3a3a" opacity="0.5"/>
<rect x="283.5" y="440.2" width="1.1" height="1.1" fill="#e0483a"/>
<rect x="285.3" y="439.3" width="9.5" height="1.0" fill="#3a3a3a" opacity="0.5"/>
<rect x="351.4" y="415.3" width="1.1" height="1.1" fill="#e0483a"/>
<rect x="353.2" y="414.4" width="5.2" height="1.0" fill="#3a3a3a" opacity="0.5"/>
<rect x="338.7" y="437.5" width="1.1" height="1.1" fill="#e0483a"/>
<rect x="340.5" y="436.6" width="9.0" height="1.0" fill="#3a3a3a" opacity="0.5"/>
<rect x="291.1" y="402.9" width="1.1" height="1.1" fill="#e0483a"/>
<rect x="292.9" y="402.0" width="7.3" height="1.0" fill="#3a3a3a" opacity="0.5"/>
<rect x="320.3" y="440.2" width="1.1" height="1.1" fill="#e0483a"/>
<rect x="322.1" y="439.3" width="7.2" height="1.0" fill="#3a3a3a" opacity="0.5"/>
<rect x="344.4" y="439.2" width="1.1" height="1.1" fill="#e0483a"/>
<rect x="346.2" y="438.3" width="7.0" height="1.0" fill="#3a3a3a" opacity="0.5"/>
<rect x="258.4" y="233.6" width="1.1" height="1.1" fill="#e0483a"/>
<rect x="260.2" y="232.7" width="6.0" height="1.0" fill="#3a3a3a" opacity="0.5"/>
<rect x="268.3" y="221.6" width="1.1" height="1.1" fill="#e0483a"/>
<rect x="270.1" y="220.7" width="5.0" height="1.0" fill="#3a3a3a" opacity="0.5"/>
<rect x="223.0" y="181.9" width="1.1" height="1.1" fill="#e0483a"/>
<rect x="224.8" y="181.0" width="6.7" height="1.0" fill="#3a3a3a" opacity="0.5"/>
<rect x="213.3" y="201.6" width="1.1" height="1.1" fill="#e0483a"/>
<rect x="215.1" y="200.7" width="7.1" height="1.0" fill="#3a3a3a" opacity="0.5"/>
<rect x="210.5" y="230.1" width="1.1" height="1.1" fill="#e0483a"/>
<rect x="212.3" y="229.2" width="10.7" height="1.0" fill="#3a3a3a" opacity="0.5"/>
<rect x="255.9" y="217.7" width="1.1" height="1.1" fill="#e0483a"/>
<rect x="257.7" y="216.8" width="5.7" height="1.0" fill="#3a3a3a" opacity="0.5"/>
<rect x="262.6" y="220.8" width="1.1" height="1.1" fill="#e0483a"/>
<rect x="264.4" y="219.9" width="10.8" height="1.0" fill="#3a3a3a" opacity="0.5"/>
<rect x="248.9" y="180.2" width="1.1" height="1.1" fill="#e0483a"/>
<rect x="250.7" y="179.3" width="6.2" height="1.0" fill="#3a3a3a" opacity="0.5"/>
<rect x="279.8" y="224.9" width="1.1" height="1.1" fill="#e0483a"/>
<rect x="281.6" y="224.0" width="7.1" height="1.0" fill="#3a3a3a" opacity="0.5"/>
<rect x="250.3" y="212.1" width="1.1" height="1.1" fill="#e0483a"/>
<rect x="252.1" y="211.2" width="9.9" height="1.0" fill="#3a3a3a" opacity="0.5"/>
<rect x="265.9" y="184.0" width="1.1" height="1.1" fill="#e0483a"/>
<rect x="267.7" y="183.1" width="9.9" height="1.0" fill="#3a3a3a" opacity="0.5"/>
<rect x="273.7" y="195.1" width="1.1" height="1.1" fill="#e0483a"/>
<rect x="275.5" y="194.2" width="7.6" height="1.0" fill="#3a3a3a" opacity="0.5"/>
<rect x="266.0" y="285.3" width="1.1" height="1.1" fill="#e0483a"/>
<rect x="267.8" y="284.4" width="5.3" height="1.0" fill="#3a3a3a" opacity="0.5"/>
<rect x="318.3" y="284.1" width="1.1" height="1.1" fill="#e0483a"/>
<rect x="320.1" y="283.2" width="7.8" height="1.0" fill="#3a3a3a" opacity="0.5"/>
<rect x="319.2" y="299.5" width="1.1" height="1.1" fill="#e0483a"/>
<rect x="321.0" y="298.6" width="7.2" height="1.0" fill="#3a3a3a" opacity="0.5"/>
<rect x="299.5" y="287.7" width="1.1" height="1.1" fill="#e0483a"/>
<rect x="301.3" y="286.8" width="10.5" height="1.0" fill="#3a3a3a" opacity="0.5"/>
<rect x="298.3" y="293.7" width="1.1" height="1.1" fill="#e0483a"/>
<rect x="300.1" y="292.8" width="6.2" height="1.0" fill="#3a3a3a" opacity="0.5"/>
<rect x="321.4" y="292.3" width="1.1" height="1.1" fill="#e0483a"/>
<rect x="323.2" y="291.4" width="7.2" height="1.0" fill="#3a3a3a" opacity="0.5"/>
<rect x="311.4" y="281.5" width="1.1" height="1.1" fill="#e0483a"/>
<rect x="313.2" y="280.6" width="10.4" height="1.0" fill="#3a3a3a" opacity="0.5"/>
<rect x="271.8" y="285.1" width="1.1" height="1.1" fill="#e0483a"/>
<rect x="273.6" y="284.2" width="5.2" height="1.0" fill="#3a3a3a" opacity="0.5"/>
<rect x="319.5" y="286.1" width="1.1" height="1.1" fill="#e0483a"/>
<rect x="321.3" y="285.2" width="7.5" height="1.0" fill="#3a3a3a" opacity="0.5"/>
<rect x="305.4" y="280.2" width="1.1" height="1.1" fill="#e0483a"/>
<rect x="307.2" y="279.3" width="9.9" height="1.0" fill="#3a3a3a" opacity="0.5"/>
<rect x="264.9" y="285.4" width="1.1" height="1.1" fill="#e0483a"/>
<rect x="266.7" y="284.5" width="9.6" height="1.0" fill="#3a3a3a" opacity="0.5"/>
<rect x="313.8" y="293.8" width="1.1" height="1.1" fill="#e0483a"/>
<rect x="315.6" y="292.9" width="5.2" height="1.0" fill="#3a3a3a" opacity="0.5"/>
<rect x="314.1" y="285.8" width="1.1" height="1.1" fill="#e0483a"/>
<rect x="315.9" y="284.9" width="5.2" height="1.0" fill="#3a3a3a" opacity="0.5"/>
<rect x="301.3" y="289.3" width="1.1" height="1.1" fill="#e0483a"/>
<rect x="303.1" y="288.4" width="5.4" height="1.0" fill="#3a3a3a" opacity="0.5"/>
<rect x="297.3" y="282.4" width="1.1" height="1.1" fill="#e0483a"/>
<rect x="299.1" y="281.5" width="10.5" height="1.0" fill="#3a3a3a" opacity="0.5"/>
</g>
<path d="M575.6,156.8 L578.2,152.9 L583.5,148.9 L586.1,143.6 L591.4,135.7 L588.8,129.0 L590.1,122.4 L598.0,117.1 L602.0,109.2 L607.3,107.2 L611.3,110.5 L607.3,115.8 L600.7,121.1 L599.4,127.7 L604.7,133.0 L612.6,131.7 L623.2,133.0 L624.5,135.7 L612.6,137.0 L607.3,140.9 L609.9,146.2 L604.7,146.2 L599.4,152.9 L591.4,156.8 L583.5,158.1 L578.2,160.8Z M554.7,138.8 L559.7,139.9 L566.3,136.3 L571.3,143.6 L574.0,151.5 L576.6,156.8 L571.9,157.6 L566.6,153.1 L565.6,146.2 L562.6,143.6 L560.1,149.1 L558.4,146.2Z M618.1,200.9 L622.6,193.5 L628.5,189.0 L636.0,192.0 L640.4,188.3 L647.9,186.0 L643.4,190.5 L649.3,196.5 L656.8,203.9 L652.3,208.4 L641.9,208.4 L631.5,205.4 L622.6,206.9 L618.1,203.9Z M671.7,193.5 L677.6,187.5 L686.5,186.8 L686.5,192.0 L682.1,196.5 L686.5,203.9 L691.0,208.4 L686.5,211.3 L689.5,220.3 L683.6,222.5 L679.1,217.3 L677.6,208.4 L674.6,200.9Z M630.0,244.8 L632.2,244.1 L634.5,248.5 L636.7,244.8 L638.9,248.5 L646.4,258.9 L653.8,272.3 L661.2,284.2 L666.5,295.4 L663.5,296.9 L658.3,288.7 L650.8,276.8 L643.4,261.9 L634.5,250.0Z M834.5,168.7 L842.4,161.9 L850.3,151.7 L852.1,152.9 L844.6,164.2 L836.7,169.8Z M242.3,189.1 L255.9,183.4 L263.8,188.0 L258.2,191.3 L246.8,192.5Z M253.6,197.0 L260.4,194.7 L258.2,207.2 L254.1,207.2Z M264.9,194.7 L275.1,193.6 L277.4,199.3 L270.6,203.8 L267.2,199.3Z M268.3,207.2 L280.8,202.7 L283.1,204.9 L271.7,209.5Z M279.7,200.4 L288.7,198.8 L289.4,201.1 L280.8,202.7Z M141.5,108.7 L156.2,106.0 L164.2,108.7 L156.2,115.5 L147.2,112.1Z M164.2,131.3 L178.9,125.7 L190.2,124.5 L181.2,131.3 L169.8,134.7Z M220.8,161.9 L224.2,161.2 L228.3,175.5 L226.0,176.6 L221.9,168.7Z M183.4,142.2 L195.9,139.9 L197.0,142.2 L184.6,144.9Z M629.5,336.2 L635.2,335.1 L634.1,341.9 L630.0,342.6Z M621.6,348.7 L623.9,348.0 L627.7,361.1 L625.4,361.6Z M635.9,364.5 L638.1,364.1 L639.0,377.0 L636.8,377.4Z M623.9,127.9 L629.5,126.8 L630.7,132.5 L625.0,133.6Z M635.2,122.3 L638.6,121.2 L640.4,129.1 L637.4,129.5Z M703.1,191.3 L707.6,188.0 L711.0,194.7 L706.5,198.1Z M747.3,189.1 L760.9,186.8 L762.0,189.1 L748.4,192.5Z M629.5,103.0 L638.6,106.4 L647.6,111.0 L643.1,115.5 L636.3,111.0 L631.8,106.4Z" fill="#b3f5ff" stroke="#3f7f86" stroke-width="0.45" stroke-linejoin="round"/>
</svg>
<span class="t" style="left:350px;top:110px;font-size:28px;line-height:31px;color:#ffffff;letter-spacing:1.049px">Dashboard</span>
<span class="t" style="left:554px;top:110px;font-size:28px;line-height:31px;color:#ffffff;letter-spacing:0.971px">Artikel</span>
<span class="t" style="left:697px;top:110px;font-size:28px;line-height:31px;color:#ffffff;letter-spacing:1.361px">Mitglieder</span>
<span class="t" style="left:920px;top:110px;font-size:28px;line-height:31px;color:#ffffff;letter-spacing:0.431px">TeamSpeak-Viewer</span>
<span class="t" style="left:321px;top:204px;font-size:24px;line-height:27px;color:#2c3e50;letter-spacing:0.322px">WoltLab Suite</span>
<span class="t" style="left:319px;top:315px;font-size:58.5px;line-height:65px;color:#2c3e50;letter-spacing:0.000px;transform:scaleX(0.9452);transform-origin:1.00px 50%;-webkit-text-stroke:1.7px #f9f9fa">TeamSpeak-Viewer</span>
<span class="t" style="left:362px;top:494px;font-size:36px;line-height:41px;color:#2c3e50;letter-spacing:0.727px">Channelliste</span>
<span class="t" style="left:1719px;top:494px;font-size:36px;line-height:41px;color:#2c3e50;letter-spacing:0.659px">Hanashis Testserver</span>
<span class="t" style="left:2771px;top:338px;font-size:28px;line-height:31px;color:#222222;letter-spacing:0.000px;transform:scaleX(0.9157);transform-origin:0.00px 50%">JETZT VERBINDEN</span>
<span class="t" style="left:402px;top:594px;font-size:28px;line-height:31px;color:#2c3e50;letter-spacing:0.543px">Hanashis Testserver</span>
<span class="t" style="left:402px;top:634px;font-size:28px;line-height:31px;color:#2c3e50;letter-spacing:0.314px">Linker Spacer</span>
<span class="t" style="left:877px;top:674px;font-size:28px;line-height:31px;color:#2c3e50;letter-spacing:0.664px">Zentrierter Spacer</span>
<span class="t" style="left:1397px;top:714px;font-size:28px;line-height:31px;color:#2c3e50;letter-spacing:0.576px">rechter Spacer</span>
<span class="t" style="left:403px;top:794px;font-size:28px;line-height:31px;color:#2c3e50;letter-spacing:0.692px">Alle Spacer ohne l/c/r/* Start</span>
<span class="t" style="left:952px;top:834px;font-size:28px;line-height:31px;color:#2c3e50;letter-spacing:0.766px">Huhu_</span>
<span class="t" style="left:442px;top:874px;font-size:28px;line-height:31px;color:#2c3e50;letter-spacing:0.702px">Default Channel</span>
<span class="t" style="left:482px;top:914px;font-size:28px;line-height:31px;color:#2c3e50;letter-spacing:0.682px">Hanashi</span>
<span class="t" style="left:483px;top:954px;font-size:28px;line-height:31px;color:#2c3e50;letter-spacing:0.000px;transform:scaleX(0.8801);transform-origin:0.00px 50%">WSC</span>
<span class="t" style="left:443px;top:994px;font-size:28px;line-height:31px;color:#2c3e50;letter-spacing:0.546px">1 Elternchannel</span>
<span class="t" style="left:483px;top:1034px;font-size:28px;line-height:31px;color:#2c3e50;letter-spacing:0.596px">1 Kindchannel</span>
<span class="t" style="left:482px;top:1074px;font-size:28px;line-height:31px;color:#2c3e50;letter-spacing:0.671px">2 Kindchannel</span>
<span class="t" style="left:443px;top:1114px;font-size:28px;line-height:31px;color:#2c3e50;letter-spacing:0.631px">und noch ein Channel</span>
<span class="t" style="left:444px;top:1154px;font-size:28px;line-height:31px;color:#2c3e50;letter-spacing:0.584px">weitere Channel</span>
<span class="t" style="left:969px;top:1194px;font-size:28px;line-height:31px;color:#2c3e50;letter-spacing:0.643px">Test</span>
<span class="t" style="left:483px;top:1234px;font-size:28px;line-height:31px;color:#2c3e50;letter-spacing:0.643px">Test</span>
<span class="t" style="left:442px;top:1274px;font-size:28px;line-height:31px;color:#2c3e50;letter-spacing:0.695px">Toller Channel</span>
<span class="t" style="left:483px;top:1314px;font-size:28px;line-height:31px;color:#2c3e50;letter-spacing:0.240px">Channel 3</span>
<span class="t" style="left:483px;top:1354px;font-size:28px;line-height:31px;color:#2c3e50;letter-spacing:-0.123px">Channel 1</span>
<span class="t" style="left:522px;top:1394px;font-size:28px;line-height:31px;color:#2c3e50;letter-spacing:0.558px">Subchannel</span>
<span class="t" style="left:563px;top:1434px;font-size:28px;line-height:31px;color:#2c3e50;letter-spacing:-0.138px">Test1</span>
<span class="t" style="left:603px;top:1474px;font-size:28px;line-height:31px;color:#2c3e50;letter-spacing:0.562px">Test2</span>
<span class="t" style="left:643px;top:1514px;font-size:28px;line-height:31px;color:#2c3e50;letter-spacing:0.587px">Test3</span>
<span class="t" style="left:483px;top:1554px;font-size:28px;line-height:31px;color:#2c3e50;letter-spacing:0.240px">Channel 2</span>
<span class="t" style="left:1719px;top:604px;font-size:28px;line-height:31px;color:#3a67a3;letter-spacing:1.194px">Hostbanner:</span>
<span class="t" style="left:1720px;top:1294px;font-size:28px;line-height:31px;color:#3a67a3;letter-spacing:0.298px">Adresse:</span>
<span class="t" style="left:1720px;top:1344px;font-size:28px;line-height:31px;color:#2c3e50;letter-spacing:0.226px">192.168.0.142</span>
<span class="t" style="left:1720px;top:1424px;font-size:28px;line-height:31px;color:#3a67a3;letter-spacing:0.632px">Passwort:</span>
<span class="t" style="left:1720px;top:1474px;font-size:28px;line-height:31px;color:#2c3e50;letter-spacing:0.976px">Test</span>
<span class="t" style="left:1720px;top:1554px;font-size:28px;line-height:31px;color:#3a67a3;letter-spacing:0.830px">Version:</span>
<span class="t" style="left:1721px;top:1604px;font-size:28px;line-height:31px;color:#2c3e50;letter-spacing:0.476px">3.6.1 [Build: 1548833692] on Linux</span>
<span class="t" style="left:1721px;top:1684px;font-size:28px;line-height:31px;color:#3a67a3;letter-spacing:0.701px">Online seit:</span>
<span class="t" style="left:1720px;top:1734px;font-size:28px;line-height:31px;color:#2c3e50;letter-spacing:0.658px">Vor 2 Stunden</span>
<span class="t" style="left:1720px;top:1814px;font-size:28px;line-height:31px;color:#3a67a3;letter-spacing:0.470px">Aktuelle Clients:</span>
<span class="t" style="left:1720px;top:1864px;font-size:28px;line-height:31px;color:#2c3e50;letter-spacing:0.424px">2 / 32</span>
<span class="t" style="left:1720px;top:1944px;font-size:28px;line-height:31px;color:#3a67a3;letter-spacing:0.475px">Aktuelle Channel:</span>
<span class="t" style="left:1720px;top:1994px;font-size:28px;line-height:31px;color:#2c3e50;letter-spacing:0.428px">22</span>
<span class="t" style="left:1625px;top:24px;font-size:26px;line-height:30px;color:#ffffff;letter-spacing:-0.035px;-webkit-text-stroke:0.55px #ffffff">testsrv.de</span>
<span class="t" style="left:2585px;top:108px;font-size:28.5px;line-height:32px;color:#ffffff;letter-spacing:0.000px;transform:scaleX(0.9777);transform-origin:2.00px 50%;-webkit-text-stroke:0.5px #ffffff">RO</span>
</body></html>
